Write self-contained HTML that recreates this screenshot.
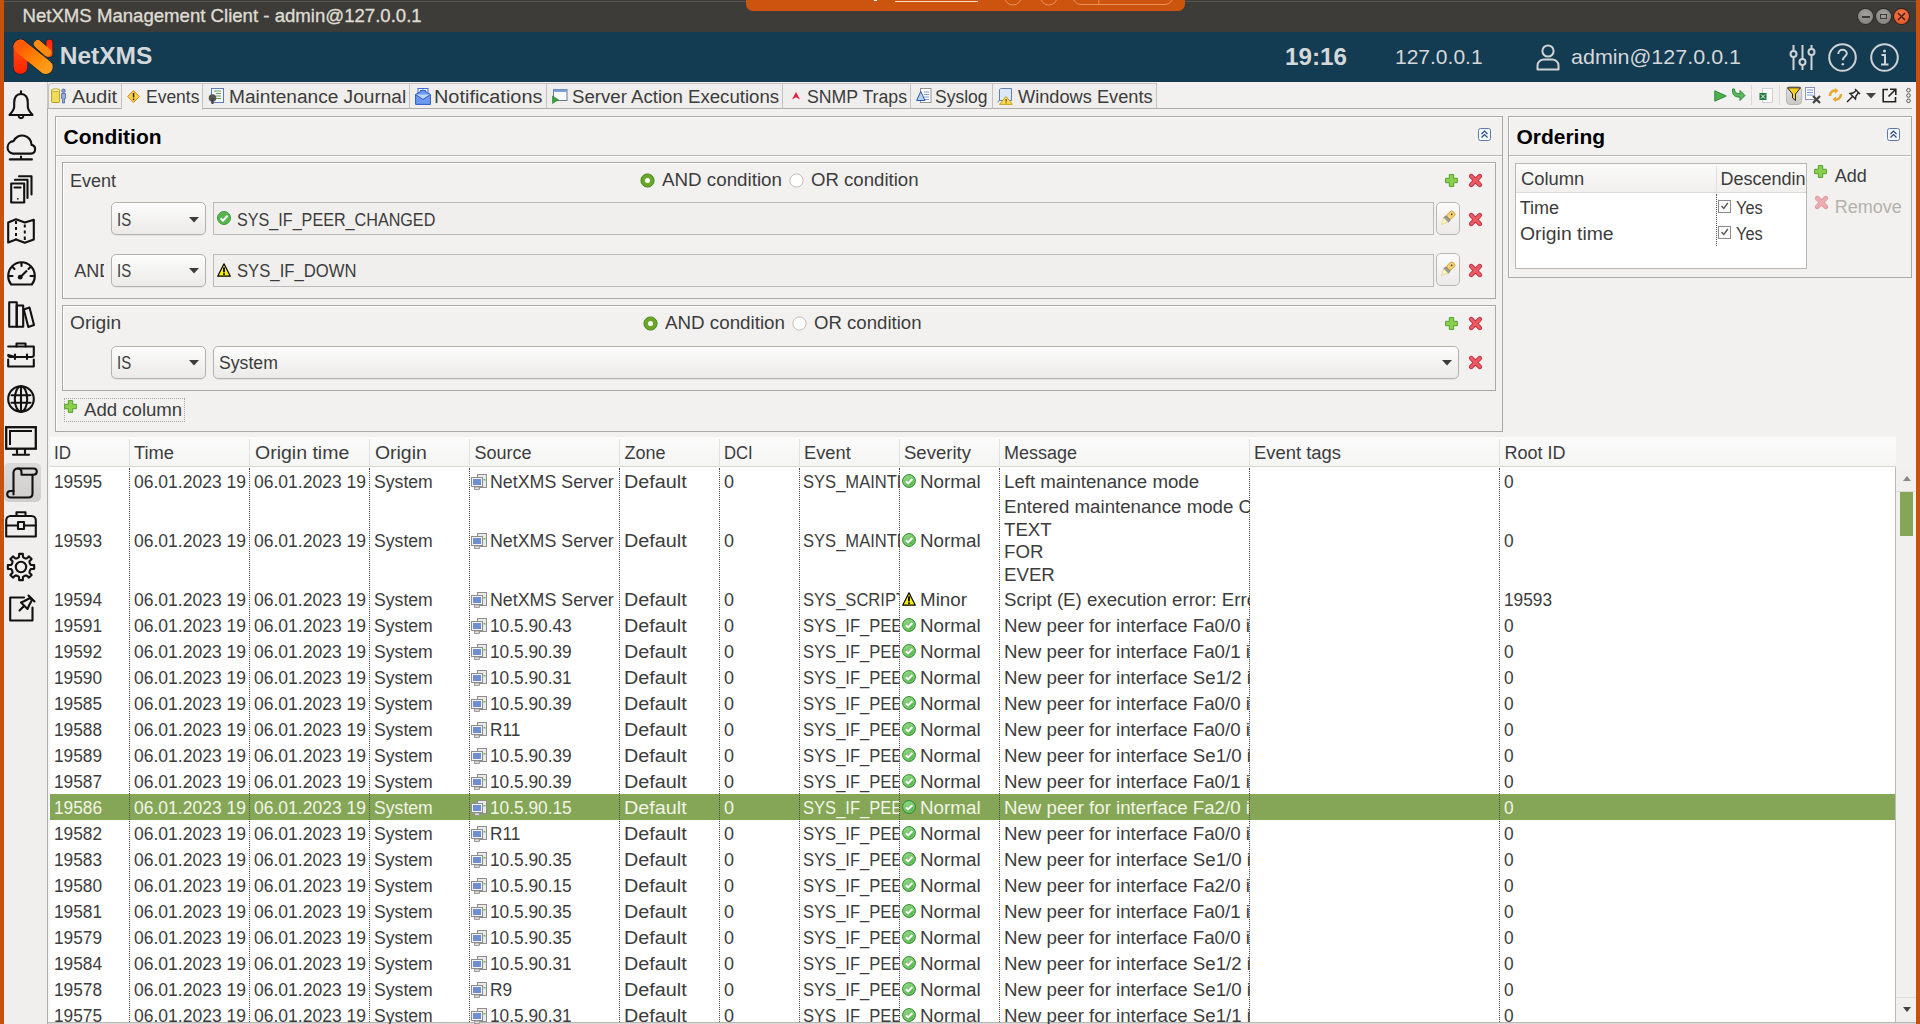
<!DOCTYPE html>
<html><head><meta charset="utf-8"><style>
html,body{margin:0;padding:0;}
body{width:1920px;height:1024px;overflow:hidden;position:relative;background:#f2f1f0;font-family:"Liberation Sans",sans-serif;}
.t{position:absolute;white-space:pre;transform-origin:0 0;}
.b{position:absolute;box-sizing:border-box;}
svg.b{overflow:visible;}
</style></head><body>
<div class="b" style="left:0px;top:0px;width:1920px;height:32px;background:#3d3c38;"></div>
<div class="b" style="left:0px;top:1px;width:1920px;height:1px;background:#57564f;"></div>
<div class="t" style="left:22.50px;top:7.25px;font-size:18.60px;line-height:18.60px;color:#dfdbd2;-webkit-text-stroke:0.35px #dfdbd2;">NetXMS Management Client - admin@127.0.0.1</div>
<div class="b" style="left:745.5px;top:-8px;width:439px;height:19.3px;background:#cd540f;border-radius:7px;"></div>
<div class="b" style="left:895px;top:0.5px;width:83px;height:1.2px;background:#fbe0c8;"></div>
<div class="b" style="left:874px;top:0px;width:3px;height:1px;background:#fff;"></div>
<svg class="b" style="left:1000px;top:-8px;" width="180" height="14" viewBox="0 0 180 14"><g fill="none" stroke="#f0a070" stroke-width="0.8"><circle cx="13" cy="4.5" r="8.5"/><circle cx="48.8" cy="4.5" r="8.5"/><rect x="73" y="-6" width="100" height="18.5" rx="8"/><path d="M98.8 0V12.5"/></g></svg>
<div class="b" style="left:1857.7px;top:8.55px;width:15.4px;height:15.4px;border-radius:50%;background:radial-gradient(circle at 50% 35%,#a4a3a0,#7b7a76);box-shadow:0 0 0 1px #2e2d2a;"></div>
<div class="b" style="left:1875.6px;top:8.55px;width:15.4px;height:15.4px;border-radius:50%;background:radial-gradient(circle at 50% 35%,#a4a3a0,#7b7a76);box-shadow:0 0 0 1px #2e2d2a;"></div>
<div class="b" style="left:1893.8px;top:8.55px;width:15.4px;height:15.4px;border-radius:50%;background:radial-gradient(circle at 50% 35%,#f4784a,#e0501f);box-shadow:0 0 0 1px #3a1d10;"></div>
<div class="b" style="left:1861.5px;top:16px;width:8px;height:1.6px;background:#3a3936;"></div>
<div class="b" style="left:1879.5px;top:13.5px;width:7.5px;height:5.5px;border:1.3px solid #3a3936;box-sizing:border-box;"></div>
<svg class="b" style="left:1897px;top:12px;" width="9" height="9" viewBox="0 0 9 9"><path d="M1 1L8 8M8 1L1 8" stroke="#4a1c0c" stroke-width="1.5"/></svg>
<div class="b" style="left:0px;top:0px;width:4px;height:1024px;background:#c9510f;"></div>
<div class="b" style="left:1916px;top:0px;width:4px;height:1024px;background:#c9510f;"></div>
<div class="b" style="left:4px;top:32px;width:1912px;height:50px;background:#133b52;"></div>
<div class="t" style="left:59.70px;top:44.01px;font-size:24.50px;line-height:24.50px;color:#d5d8da;font-weight:bold;">NetXMS</div>
<div class="t" style="left:1285.00px;top:44.68px;font-size:24.00px;line-height:24.00px;color:#d5d8da;font-weight:bold;transform:scaleX(1.0102);">19:16</div>
<div class="t" style="left:1395.00px;top:46.47px;font-size:21.00px;line-height:21.00px;color:#d5d8da;">127.0.0.1</div>
<div class="t" style="left:1571.00px;top:46.12px;font-size:21.00px;line-height:21.00px;color:#d5d8da;transform:scaleX(1.0236);">admin@127.0.0.1</div>
<div class="b" style="left:4px;top:82px;width:43px;height:942px;background:#f0efee;"></div>
<div class="b" style="left:47px;top:82px;width:1px;height:942px;background:#c8c6c2;"></div>
<div class="b" style="left:48px;top:82px;width:1868px;height:942px;background:#f2f1f0;"></div>
<div class="b" style="left:48px;top:108px;width:1864px;height:1px;background:#aeaca8;"></div>
<div class="b" style="left:47.5px;top:83px;width:74.5px;height:26px;background:#efeeec;border-right:1px solid #c4c2be;border-left:1px solid #c4c2be;border-top-left-radius:4px;border-top:1px solid #c4c2be;border-bottom:1px solid #aeaca8;"></div>
<div class="t" style="left:72.00px;top:87.66px;font-size:18.00px;line-height:18.00px;color:#3c3c3c;transform:scaleX(1.0969);">Audit</div>
<div class="b" style="left:122px;top:83px;width:81px;height:27px;background:#f2f1f0;border-right:1px solid #c4c2be;border-top:1px solid #c4c2be;"></div>
<div class="t" style="left:146.00px;top:87.66px;font-size:18.00px;line-height:18.00px;color:#3c3c3c;transform:scaleX(0.9704);">Events</div>
<div class="b" style="left:203px;top:83px;width:206.5px;height:26px;background:#efeeec;border-right:1px solid #c4c2be;border-top:1px solid #c4c2be;border-bottom:1px solid #aeaca8;"></div>
<div class="t" style="left:228.50px;top:87.66px;font-size:18.00px;line-height:18.00px;color:#3c3c3c;transform:scaleX(1.0605);">Maintenance Journal</div>
<div class="b" style="left:409.5px;top:83px;width:137.0px;height:26px;background:#efeeec;border-right:1px solid #c4c2be;border-top:1px solid #c4c2be;border-bottom:1px solid #aeaca8;"></div>
<div class="t" style="left:434.40px;top:87.66px;font-size:18.00px;line-height:18.00px;color:#3c3c3c;transform:scaleX(1.1057);">Notifications</div>
<div class="b" style="left:546.5px;top:83px;width:236.0px;height:26px;background:#efeeec;border-right:1px solid #c4c2be;border-top:1px solid #c4c2be;border-bottom:1px solid #aeaca8;"></div>
<div class="t" style="left:571.50px;top:87.66px;font-size:18.00px;line-height:18.00px;color:#3c3c3c;transform:scaleX(1.0350);">Server Action Executions</div>
<div class="b" style="left:782.5px;top:83px;width:128.0px;height:26px;background:#efeeec;border-right:1px solid #c4c2be;border-top:1px solid #c4c2be;border-bottom:1px solid #aeaca8;"></div>
<div class="t" style="left:807.20px;top:87.66px;font-size:18.00px;line-height:18.00px;color:#3c3c3c;transform:scaleX(0.9833);">SNMP Traps</div>
<div class="b" style="left:910.5px;top:83px;width:82.0px;height:26px;background:#efeeec;border-right:1px solid #c4c2be;border-top:1px solid #c4c2be;border-bottom:1px solid #aeaca8;"></div>
<div class="t" style="left:935.30px;top:87.66px;font-size:18.00px;line-height:18.00px;color:#3c3c3c;transform:scaleX(0.9718);">Syslog</div>
<div class="b" style="left:992.5px;top:83px;width:164.0px;height:26px;background:#efeeec;border-right:1px solid #c4c2be;border-top:1px solid #c4c2be;border-bottom:1px solid #aeaca8;"></div>
<div class="t" style="left:1017.80px;top:87.66px;font-size:18.00px;line-height:18.00px;color:#3c3c3c;transform:scaleX(1.0117);">Windows Events</div>
<div class="b" style="left:47px;top:108px;width:1px;height:916px;background:#aeaca8;"></div>
<div class="b" style="left:55px;top:116px;width:1448px;height:316px;border:1px solid #aaa8a4;box-shadow:inset 1px 1px 0 #ffffff;background:#f2f1f0;"></div>
<div class="b" style="left:56px;top:155px;width:1446px;height:1px;background:#b9b7b3;"></div>
<div class="b" style="left:56px;top:156px;width:1446px;height:1px;background:#ffffff;"></div>
<div class="t" style="left:63.60px;top:126.02px;font-size:21.00px;line-height:21.00px;color:#000000;font-weight:bold;">Condition</div>
<div class="b" style="left:62px;top:162px;width:1434px;height:137px;border:1px solid #aaa8a4;box-shadow:inset 1px 1px 0 #ffffff;background:#f2f1f0;"></div>
<div class="t" style="left:69.90px;top:171.66px;font-size:18.00px;line-height:18.00px;color:#3c3c3c;">Event</div>
<div class="t" style="left:74.20px;top:262.06px;font-size:18.00px;line-height:18.00px;color:#3c3c3c;width:29.5px;overflow:hidden;">AND</div>
<div class="b" style="left:62px;top:305px;width:1434px;height:86px;border:1px solid #aaa8a4;box-shadow:inset 1px 1px 0 #ffffff;background:#f2f1f0;"></div>
<div class="t" style="left:69.80px;top:314.36px;font-size:18.00px;line-height:18.00px;color:#3c3c3c;transform:scaleX(1.0664);">Origin</div>
<div class="b" style="left:110.5px;top:202px;width:95px;height:33px;border:1px solid #b3b1ad;border-radius:5px;background:linear-gradient(#fdfdfd,#ebeae8);box-shadow:0 1px 0 rgba(0,0,0,0.05);"></div>
<div class="t" style="left:116.70px;top:210.56px;font-size:18.00px;line-height:18.00px;color:#3c3c3c;transform:scaleX(0.8291);">IS</div>
<svg class="b" style="left:188.5px;top:216.5px;" width="10" height="6" viewBox="0 0 10 6"><path d="M0 0H10L5 5.5Z" fill="#3c3c3c"/></svg>
<div class="b" style="left:110.5px;top:253.5px;width:95px;height:33px;border:1px solid #b3b1ad;border-radius:5px;background:linear-gradient(#fdfdfd,#ebeae8);box-shadow:0 1px 0 rgba(0,0,0,0.05);"></div>
<div class="t" style="left:116.70px;top:262.06px;font-size:18.00px;line-height:18.00px;color:#3c3c3c;transform:scaleX(0.8291);">IS</div>
<svg class="b" style="left:188.5px;top:268.0px;" width="10" height="6" viewBox="0 0 10 6"><path d="M0 0H10L5 5.5Z" fill="#3c3c3c"/></svg>
<div class="b" style="left:110.5px;top:345.7px;width:95px;height:33px;border:1px solid #b3b1ad;border-radius:5px;background:linear-gradient(#fdfdfd,#ebeae8);box-shadow:0 1px 0 rgba(0,0,0,0.05);"></div>
<div class="t" style="left:116.70px;top:354.26px;font-size:18.00px;line-height:18.00px;color:#3c3c3c;transform:scaleX(0.8291);">IS</div>
<svg class="b" style="left:188.5px;top:360.2px;" width="10" height="6" viewBox="0 0 10 6"><path d="M0 0H10L5 5.5Z" fill="#3c3c3c"/></svg>
<div class="b" style="left:213.4px;top:345.7px;width:1246px;height:33px;border:1px solid #b3b1ad;border-radius:5px;background:linear-gradient(#fdfdfd,#ebeae8);box-shadow:0 1px 0 rgba(0,0,0,0.05);"></div>
<div class="t" style="left:219.20px;top:354.26px;font-size:18.00px;line-height:18.00px;color:#3c3c3c;transform:scaleX(0.9815);">System</div>
<svg class="b" style="left:1442.4px;top:360.2px;" width="10" height="6" viewBox="0 0 10 6"><path d="M0 0H10L5 5.5Z" fill="#3c3c3c"/></svg>
<div class="b" style="left:212.5px;top:201.7px;width:1221px;height:33.5px;border:1px solid #bdbbb7;background:#f0efee;"></div>
<div class="b" style="left:212.5px;top:253.5px;width:1221px;height:33.5px;border:1px solid #bdbbb7;background:#f0efee;"></div>
<div class="t" style="left:236.70px;top:210.56px;font-size:18.00px;line-height:18.00px;color:#3c3c3c;transform:scaleX(0.8970);">SYS_IF_PEER_CHANGED</div>
<div class="t" style="left:236.70px;top:262.06px;font-size:18.00px;line-height:18.00px;color:#3c3c3c;transform:scaleX(0.9262);">SYS_IF_DOWN</div>
<div class="b" style="left:1436.4px;top:202px;width:23.3px;height:32.5px;border:1px solid #b9b7b3;border-radius:5px;background:linear-gradient(#fbfbfa,#eceae8);"></div>
<div class="b" style="left:1436.4px;top:253.4px;width:23.3px;height:32.5px;border:1px solid #b9b7b3;border-radius:5px;background:linear-gradient(#fbfbfa,#eceae8);"></div>
<div class="b" style="left:63.5px;top:398.4px;width:121.5px;height:23.2px;border:1px dotted #a8a6a2;"></div>
<div class="t" style="left:84.40px;top:401.46px;font-size:18.00px;line-height:18.00px;color:#3c3c3c;transform:scaleX(1.0332);">Add column</div>
<div class="t" style="left:661.70px;top:171.46px;font-size:18.00px;line-height:18.00px;color:#3c3c3c;transform:scaleX(1.0430);">AND condition</div>
<div class="t" style="left:810.80px;top:171.46px;font-size:18.00px;line-height:18.00px;color:#3c3c3c;transform:scaleX(1.0332);">OR condition</div>
<div class="t" style="left:664.70px;top:314.46px;font-size:18.00px;line-height:18.00px;color:#3c3c3c;transform:scaleX(1.0430);">AND condition</div>
<div class="t" style="left:813.80px;top:314.46px;font-size:18.00px;line-height:18.00px;color:#3c3c3c;transform:scaleX(1.0332);">OR condition</div>
<div class="b" style="left:1508px;top:116px;width:404px;height:162px;border:1px solid #aaa8a4;box-shadow:inset 1px 1px 0 #ffffff;background:#f2f1f0;"></div>
<div class="b" style="left:1509px;top:155px;width:402px;height:1px;background:#b9b7b3;"></div>
<div class="b" style="left:1509px;top:156px;width:402px;height:1px;background:#ffffff;"></div>
<div class="t" style="left:1516.40px;top:126.12px;font-size:21.00px;line-height:21.00px;color:#000000;font-weight:bold;">Ordering</div>
<div class="b" style="left:1515.3px;top:162.5px;width:291.5px;height:106px;border:1px solid #b9b7b3;background:#ffffff;"></div>
<div class="b" style="left:1516.3px;top:163.5px;width:289.5px;height:29.5px;background:linear-gradient(#fafaf9,#f1f0ef);border-bottom:1px solid #dcdad7;"></div>
<div class="b" style="left:1715.5px;top:166px;width:1px;height:26px;background:#e2e0dd;"></div>
<div class="t" style="left:1520.50px;top:169.76px;font-size:18.00px;line-height:18.00px;color:#3c3c3c;transform:scaleX(1.0206);">Column</div>
<div class="b" style="left:1716px;top:163px;width:90px;height:30px;overflow:hidden;"><div class="t" style="left:4.5px;top:6.76px;font-size:18px;line-height:18px;color:#3c3c3c;">Descending</div></div>
<div class="b" style="left:1715.5px;top:194px;width:1px;height:52px;border-left:1px dotted #555;"></div>
<div class="t" style="left:1519.70px;top:198.66px;font-size:18.00px;line-height:18.00px;color:#3c3c3c;">Time</div>
<div class="t" style="left:1519.70px;top:224.96px;font-size:18.00px;line-height:18.00px;color:#3c3c3c;transform:scaleX(1.0757);">Origin time</div>
<div class="t" style="left:1735.80px;top:198.66px;font-size:18.00px;line-height:18.00px;color:#3c3c3c;transform:scaleX(0.9092);">Yes</div>
<div class="t" style="left:1735.80px;top:224.96px;font-size:18.00px;line-height:18.00px;color:#3c3c3c;transform:scaleX(0.9092);">Yes</div>
<div class="b" style="left:1718px;top:200px;width:12.8px;height:12.8px;border:1px solid #8e8c88;background:#fafafa;"></div>
<svg class="b" style="left:1720px;top:202px;" width="9" height="8" viewBox="0 0 9 8"><path d="M1.5 4L3.8 6.5L7.8 1" stroke="#555" stroke-width="1.3" fill="none"/></svg>
<div class="b" style="left:1718px;top:226.3px;width:12.8px;height:12.8px;border:1px solid #8e8c88;background:#fafafa;"></div>
<svg class="b" style="left:1720px;top:228.3px;" width="9" height="8" viewBox="0 0 9 8"><path d="M1.5 4L3.8 6.5L7.8 1" stroke="#555" stroke-width="1.3" fill="none"/></svg>
<div class="t" style="left:1834.70px;top:166.56px;font-size:18.00px;line-height:18.00px;color:#3c3c3c;">Add</div>
<div class="t" style="left:1834.70px;top:197.56px;font-size:18.00px;line-height:18.00px;color:#b3b1ad;">Remove</div>
<div class="b" style="left:49.5px;top:436.5px;width:1846px;height:30.5px;background:linear-gradient(#fbfbfb,#f5f5f4);border-bottom:1px solid #d9d7d4;"></div>
<div class="t" style="left:54.40px;top:443.51px;font-size:18.00px;line-height:18.00px;color:#3c3c3c;transform:scaleX(0.9444);">ID</div>
<div class="b" style="left:129px;top:439px;width:1px;height:27px;background:#e4e2df;"></div>
<div class="t" style="left:134.40px;top:443.51px;font-size:18.00px;line-height:18.00px;color:#3c3c3c;transform:scaleX(1.0170);">Time</div>
<div class="b" style="left:249px;top:439px;width:1px;height:27px;background:#e4e2df;"></div>
<div class="t" style="left:254.50px;top:443.51px;font-size:18.00px;line-height:18.00px;color:#3c3c3c;transform:scaleX(1.0831);">Origin time</div>
<div class="b" style="left:369px;top:439px;width:1px;height:27px;background:#e4e2df;"></div>
<div class="t" style="left:374.50px;top:443.51px;font-size:18.00px;line-height:18.00px;color:#3c3c3c;transform:scaleX(1.0779);">Origin</div>
<div class="b" style="left:469px;top:439px;width:1px;height:27px;background:#e4e2df;"></div>
<div class="t" style="left:474.50px;top:443.51px;font-size:18.00px;line-height:18.00px;color:#3c3c3c;">Source</div>
<div class="b" style="left:619px;top:439px;width:1px;height:27px;background:#e4e2df;"></div>
<div class="t" style="left:624.50px;top:443.51px;font-size:18.00px;line-height:18.00px;color:#3c3c3c;">Zone</div>
<div class="b" style="left:719px;top:439px;width:1px;height:27px;background:#e4e2df;"></div>
<div class="t" style="left:723.80px;top:443.51px;font-size:18.00px;line-height:18.00px;color:#3c3c3c;transform:scaleX(0.9226);">DCI</div>
<div class="b" style="left:799px;top:439px;width:1px;height:27px;background:#e4e2df;"></div>
<div class="t" style="left:804.00px;top:443.51px;font-size:18.00px;line-height:18.00px;color:#3c3c3c;transform:scaleX(1.0146);">Event</div>
<div class="b" style="left:899px;top:439px;width:1px;height:27px;background:#e4e2df;"></div>
<div class="t" style="left:903.70px;top:443.51px;font-size:18.00px;line-height:18.00px;color:#3c3c3c;transform:scaleX(1.0305);">Severity</div>
<div class="b" style="left:999px;top:439px;width:1px;height:27px;background:#e4e2df;"></div>
<div class="t" style="left:1004.00px;top:443.51px;font-size:18.00px;line-height:18.00px;color:#3c3c3c;">Message</div>
<div class="b" style="left:1249px;top:439px;width:1px;height:27px;background:#e4e2df;"></div>
<div class="t" style="left:1253.80px;top:443.51px;font-size:18.00px;line-height:18.00px;color:#3c3c3c;transform:scaleX(1.0230);">Event tags</div>
<div class="b" style="left:1499px;top:439px;width:1px;height:27px;background:#e4e2df;"></div>
<div class="t" style="left:1504.50px;top:443.51px;font-size:18.00px;line-height:18.00px;color:#3c3c3c;">Root ID</div>
<div class="b" style="left:48px;top:467px;width:2px;height:555px;background:#f6f6f5;"></div>
<div class="b" style="left:50px;top:467px;width:1846px;height:555px;background:#ffffff;"></div>
<div class="b" style="left:1895px;top:467px;width:1px;height:555px;background:#bdbbb7;"></div>
<div class="b" style="left:1896px;top:467px;width:20px;height:557px;background:#f1f0ef;"></div>
<div class="b" style="left:1896px;top:491px;width:20px;height:1px;background:#dedcd9;"></div>
<div class="b" style="left:1896px;top:997px;width:20px;height:1px;background:#dedcd9;"></div>
<svg class="b" style="left:1902.5px;top:476px;" width="8" height="5" viewBox="0 0 8 5"><path d="M0 5H8L4 0Z" fill="#888"/></svg>
<svg class="b" style="left:1903px;top:1007px;" width="8" height="5" viewBox="0 0 8 5"><path d="M0 0H8L4 5Z" fill="#444"/></svg>
<div class="b" style="left:1900px;top:491.7px;width:13px;height:44px;background:#85a657;"></div>
<div class="b" style="left:48px;top:1022px;width:1868px;height:1px;background:#b9b7b3;"></div>
<div class="b" style="left:48px;top:1023px;width:1868px;height:1px;background:#dcdad7;"></div>
<div class="b" style="left:48.0px;top:468.0px;width:81.5px;height:26.0px;overflow:hidden;"><div class="t" style="left:6.4px;top:5.26px;font-size:18px;line-height:18px;color:#3c3c3c;transform:scaleX(0.960);">19595</div></div>
<div class="b" style="left:129.5px;top:468.0px;width:120.0px;height:26.0px;overflow:hidden;"><div class="t" style="left:4.5px;top:5.26px;font-size:18px;line-height:18px;color:#3c3c3c;transform:scaleX(0.973);">06.01.2023 19</div></div>
<div class="b" style="left:249.5px;top:468.0px;width:120.0px;height:26.0px;overflow:hidden;"><div class="t" style="left:4.5px;top:5.26px;font-size:18px;line-height:18px;color:#3c3c3c;transform:scaleX(0.973);">06.01.2023 19</div></div>
<div class="b" style="left:369.5px;top:468.0px;width:100.0px;height:26.0px;overflow:hidden;"><div class="t" style="left:4.0px;top:5.26px;font-size:18px;line-height:18px;color:#3c3c3c;transform:scaleX(0.979);">System</div></div>
<div class="b" style="left:469.5px;top:468.0px;width:150.0px;height:26.0px;overflow:hidden;"><div class="t" style="left:20.5px;top:5.26px;font-size:18px;line-height:18px;color:#3c3c3c;transform:scaleX(0.990);">NetXMS Server</div></div>
<svg class="b" style="left:471.0px;top:473.5px" width="16" height="16" viewBox="0 0 16 16"><rect x="6.5" y="0.5" width="9" height="13" fill="#e9e9e9" stroke="#8d8d8d"/><rect x="0.5" y="3.5" width="11" height="9" fill="#f3f3f3" stroke="#8d8d8d"/><rect x="2" y="5" width="8" height="6" fill="#6f8fd0"/><rect x="12.5" y="5" width="2" height="1.5" fill="#6cb85a"/><rect x="3.5" y="13" width="5" height="2.5" fill="#dcdcdc" stroke="#8d8d8d" stroke-width="0.8"/></svg>
<div class="b" style="left:619.5px;top:468.0px;width:100.0px;height:26.0px;overflow:hidden;"><div class="t" style="left:4.5px;top:5.26px;font-size:18px;line-height:18px;color:#3c3c3c;transform:scaleX(1.099);">Default</div></div>
<div class="b" style="left:719.5px;top:468.0px;width:80.0px;height:26.0px;overflow:hidden;"><div class="t" style="left:4.5px;top:5.26px;font-size:18px;line-height:18px;color:#3c3c3c;">0</div></div>
<div class="b" style="left:799.5px;top:468.0px;width:100.0px;height:26.0px;overflow:hidden;"><div class="t" style="left:3.6px;top:5.26px;font-size:18px;line-height:18px;color:#3c3c3c;transform:scaleX(0.920);">SYS_MAINTENANCE</div></div>
<div class="b" style="left:899.5px;top:468.0px;width:100.0px;height:26.0px;overflow:hidden;"><div class="t" style="left:20.4px;top:5.26px;font-size:18px;line-height:18px;color:#3c3c3c;transform:scaleX(1.044);">Normal</div></div>
<svg class="b" style="left:902.0px;top:474.0px" width="14" height="14" viewBox="0 0 14 14"><defs><radialGradient id="cg468" cx="0.4" cy="0.3" r="0.8"><stop offset="0" stop-color="#8ad47e"/><stop offset="1" stop-color="#3ea836"/></radialGradient></defs><circle cx="7" cy="7" r="6.4" fill="url(#cg468)" stroke="#2f8a2a" stroke-width="1"/><circle cx="7" cy="7" r="5.2" fill="none" stroke="#b8e8b0" stroke-width="0.7" opacity="0.7"/><path d="M3.8 7.2L6.1 9.4L10.4 5" stroke="#fff" stroke-width="2" fill="none"/></svg>
<div class="b" style="left:999.5px;top:468.0px;width:250.0px;height:26.0px;overflow:hidden;"><div class="t" style="left:4.0px;top:5.26px;font-size:18px;line-height:18px;color:#3c3c3c;transform:scaleX(1.037);">Left maintenance mode</div></div>
<div class="b" style="left:1249.5px;top:468.0px;width:250.0px;height:26.0px;overflow:hidden;"><div class="t" style="left:4.5px;top:5.26px;font-size:18px;line-height:18px;color:#3c3c3c;"></div></div>
<div class="b" style="left:1499.5px;top:468.0px;width:396.0px;height:26.0px;overflow:hidden;"><div class="t" style="left:4.5px;top:5.26px;font-size:18px;line-height:18px;color:#3c3c3c;transform:scaleX(0.960);">0</div></div>
<div class="b" style="left:48.0px;top:494.0px;width:81.5px;height:92.0px;overflow:hidden;"><div class="t" style="left:6.4px;top:38.26px;font-size:18px;line-height:18px;color:#3c3c3c;transform:scaleX(0.960);">19593</div></div>
<div class="b" style="left:129.5px;top:494.0px;width:120.0px;height:92.0px;overflow:hidden;"><div class="t" style="left:4.5px;top:38.26px;font-size:18px;line-height:18px;color:#3c3c3c;transform:scaleX(0.973);">06.01.2023 19</div></div>
<div class="b" style="left:249.5px;top:494.0px;width:120.0px;height:92.0px;overflow:hidden;"><div class="t" style="left:4.5px;top:38.26px;font-size:18px;line-height:18px;color:#3c3c3c;transform:scaleX(0.973);">06.01.2023 19</div></div>
<div class="b" style="left:369.5px;top:494.0px;width:100.0px;height:92.0px;overflow:hidden;"><div class="t" style="left:4.0px;top:38.26px;font-size:18px;line-height:18px;color:#3c3c3c;transform:scaleX(0.979);">System</div></div>
<div class="b" style="left:469.5px;top:494.0px;width:150.0px;height:92.0px;overflow:hidden;"><div class="t" style="left:20.5px;top:38.26px;font-size:18px;line-height:18px;color:#3c3c3c;transform:scaleX(0.990);">NetXMS Server</div></div>
<svg class="b" style="left:471.0px;top:532.5px" width="16" height="16" viewBox="0 0 16 16"><rect x="6.5" y="0.5" width="9" height="13" fill="#e9e9e9" stroke="#8d8d8d"/><rect x="0.5" y="3.5" width="11" height="9" fill="#f3f3f3" stroke="#8d8d8d"/><rect x="2" y="5" width="8" height="6" fill="#6f8fd0"/><rect x="12.5" y="5" width="2" height="1.5" fill="#6cb85a"/><rect x="3.5" y="13" width="5" height="2.5" fill="#dcdcdc" stroke="#8d8d8d" stroke-width="0.8"/></svg>
<div class="b" style="left:619.5px;top:494.0px;width:100.0px;height:92.0px;overflow:hidden;"><div class="t" style="left:4.5px;top:38.26px;font-size:18px;line-height:18px;color:#3c3c3c;transform:scaleX(1.099);">Default</div></div>
<div class="b" style="left:719.5px;top:494.0px;width:80.0px;height:92.0px;overflow:hidden;"><div class="t" style="left:4.5px;top:38.26px;font-size:18px;line-height:18px;color:#3c3c3c;">0</div></div>
<div class="b" style="left:799.5px;top:494.0px;width:100.0px;height:92.0px;overflow:hidden;"><div class="t" style="left:3.6px;top:38.26px;font-size:18px;line-height:18px;color:#3c3c3c;transform:scaleX(0.920);">SYS_MAINTENANCE</div></div>
<div class="b" style="left:899.5px;top:494.0px;width:100.0px;height:92.0px;overflow:hidden;"><div class="t" style="left:20.4px;top:38.26px;font-size:18px;line-height:18px;color:#3c3c3c;transform:scaleX(1.044);">Normal</div></div>
<svg class="b" style="left:902.0px;top:533.0px" width="14" height="14" viewBox="0 0 14 14"><defs><radialGradient id="cg494" cx="0.4" cy="0.3" r="0.8"><stop offset="0" stop-color="#8ad47e"/><stop offset="1" stop-color="#3ea836"/></radialGradient></defs><circle cx="7" cy="7" r="6.4" fill="url(#cg494)" stroke="#2f8a2a" stroke-width="1"/><circle cx="7" cy="7" r="5.2" fill="none" stroke="#b8e8b0" stroke-width="0.7" opacity="0.7"/><path d="M3.8 7.2L6.1 9.4L10.4 5" stroke="#fff" stroke-width="2" fill="none"/></svg>
<div class="b" style="left:999.5px;top:495.5px;width:250.0px;height:22.5px;overflow:hidden;"><div class="t" style="left:4.0px;top:2.76px;font-size:18px;line-height:18px;color:#3c3c3c;transform:scaleX(1.037);">Entered maintenance mode C</div></div>
<div class="b" style="left:999.5px;top:518.0px;width:250.0px;height:22.5px;overflow:hidden;"><div class="t" style="left:4.0px;top:2.76px;font-size:18px;line-height:18px;color:#3c3c3c;transform:scaleX(1.037);">TEXT</div></div>
<div class="b" style="left:999.5px;top:540.5px;width:250.0px;height:22.5px;overflow:hidden;"><div class="t" style="left:4.0px;top:2.76px;font-size:18px;line-height:18px;color:#3c3c3c;transform:scaleX(1.037);">FOR</div></div>
<div class="b" style="left:999.5px;top:563.0px;width:250.0px;height:22.5px;overflow:hidden;"><div class="t" style="left:4.0px;top:2.76px;font-size:18px;line-height:18px;color:#3c3c3c;transform:scaleX(1.037);">EVER</div></div>
<div class="b" style="left:1249.5px;top:494.0px;width:250.0px;height:92.0px;overflow:hidden;"><div class="t" style="left:4.5px;top:38.26px;font-size:18px;line-height:18px;color:#3c3c3c;"></div></div>
<div class="b" style="left:1499.5px;top:494.0px;width:396.0px;height:92.0px;overflow:hidden;"><div class="t" style="left:4.5px;top:38.26px;font-size:18px;line-height:18px;color:#3c3c3c;transform:scaleX(0.960);">0</div></div>
<div class="b" style="left:48.0px;top:586.0px;width:81.5px;height:26.0px;overflow:hidden;"><div class="t" style="left:6.4px;top:5.26px;font-size:18px;line-height:18px;color:#3c3c3c;transform:scaleX(0.960);">19594</div></div>
<div class="b" style="left:129.5px;top:586.0px;width:120.0px;height:26.0px;overflow:hidden;"><div class="t" style="left:4.5px;top:5.26px;font-size:18px;line-height:18px;color:#3c3c3c;transform:scaleX(0.973);">06.01.2023 19</div></div>
<div class="b" style="left:249.5px;top:586.0px;width:120.0px;height:26.0px;overflow:hidden;"><div class="t" style="left:4.5px;top:5.26px;font-size:18px;line-height:18px;color:#3c3c3c;transform:scaleX(0.973);">06.01.2023 19</div></div>
<div class="b" style="left:369.5px;top:586.0px;width:100.0px;height:26.0px;overflow:hidden;"><div class="t" style="left:4.0px;top:5.26px;font-size:18px;line-height:18px;color:#3c3c3c;transform:scaleX(0.979);">System</div></div>
<div class="b" style="left:469.5px;top:586.0px;width:150.0px;height:26.0px;overflow:hidden;"><div class="t" style="left:20.5px;top:5.26px;font-size:18px;line-height:18px;color:#3c3c3c;transform:scaleX(0.990);">NetXMS Server</div></div>
<svg class="b" style="left:471.0px;top:591.5px" width="16" height="16" viewBox="0 0 16 16"><rect x="6.5" y="0.5" width="9" height="13" fill="#e9e9e9" stroke="#8d8d8d"/><rect x="0.5" y="3.5" width="11" height="9" fill="#f3f3f3" stroke="#8d8d8d"/><rect x="2" y="5" width="8" height="6" fill="#6f8fd0"/><rect x="12.5" y="5" width="2" height="1.5" fill="#6cb85a"/><rect x="3.5" y="13" width="5" height="2.5" fill="#dcdcdc" stroke="#8d8d8d" stroke-width="0.8"/></svg>
<div class="b" style="left:619.5px;top:586.0px;width:100.0px;height:26.0px;overflow:hidden;"><div class="t" style="left:4.5px;top:5.26px;font-size:18px;line-height:18px;color:#3c3c3c;transform:scaleX(1.099);">Default</div></div>
<div class="b" style="left:719.5px;top:586.0px;width:80.0px;height:26.0px;overflow:hidden;"><div class="t" style="left:4.5px;top:5.26px;font-size:18px;line-height:18px;color:#3c3c3c;">0</div></div>
<div class="b" style="left:799.5px;top:586.0px;width:100.0px;height:26.0px;overflow:hidden;"><div class="t" style="left:3.6px;top:5.26px;font-size:18px;line-height:18px;color:#3c3c3c;transform:scaleX(0.920);">SYS_SCRIPT_ERROR</div></div>
<div class="b" style="left:899.5px;top:586.0px;width:100.0px;height:26.0px;overflow:hidden;"><div class="t" style="left:20.4px;top:5.26px;font-size:18px;line-height:18px;color:#3c3c3c;transform:scaleX(1.044);">Minor</div></div>
<svg class="b" style="left:902.0px;top:592.0px" width="14" height="14" viewBox="0 0 14 14"><path d="M7 0.8L13.3 13.2H0.7Z" fill="#f4f000" stroke="#000" stroke-width="1.2" stroke-linejoin="round"/><rect x="6.1" y="4.4" width="1.8" height="5" fill="#000"/><rect x="6.1" y="10.3" width="1.8" height="1.8" fill="#000"/></svg>
<div class="b" style="left:999.5px;top:586.0px;width:250.0px;height:26.0px;overflow:hidden;"><div class="t" style="left:4.0px;top:5.26px;font-size:18px;line-height:18px;color:#3c3c3c;transform:scaleX(1.037);">Script (E) execution error: Error</div></div>
<div class="b" style="left:1249.5px;top:586.0px;width:250.0px;height:26.0px;overflow:hidden;"><div class="t" style="left:4.5px;top:5.26px;font-size:18px;line-height:18px;color:#3c3c3c;"></div></div>
<div class="b" style="left:1499.5px;top:586.0px;width:396.0px;height:26.0px;overflow:hidden;"><div class="t" style="left:4.5px;top:5.26px;font-size:18px;line-height:18px;color:#3c3c3c;transform:scaleX(0.960);">19593</div></div>
<div class="b" style="left:48.0px;top:612.0px;width:81.5px;height:26.0px;overflow:hidden;"><div class="t" style="left:6.4px;top:5.26px;font-size:18px;line-height:18px;color:#3c3c3c;transform:scaleX(0.960);">19591</div></div>
<div class="b" style="left:129.5px;top:612.0px;width:120.0px;height:26.0px;overflow:hidden;"><div class="t" style="left:4.5px;top:5.26px;font-size:18px;line-height:18px;color:#3c3c3c;transform:scaleX(0.973);">06.01.2023 19</div></div>
<div class="b" style="left:249.5px;top:612.0px;width:120.0px;height:26.0px;overflow:hidden;"><div class="t" style="left:4.5px;top:5.26px;font-size:18px;line-height:18px;color:#3c3c3c;transform:scaleX(0.973);">06.01.2023 19</div></div>
<div class="b" style="left:369.5px;top:612.0px;width:100.0px;height:26.0px;overflow:hidden;"><div class="t" style="left:4.0px;top:5.26px;font-size:18px;line-height:18px;color:#3c3c3c;transform:scaleX(0.979);">System</div></div>
<div class="b" style="left:469.5px;top:612.0px;width:150.0px;height:26.0px;overflow:hidden;"><div class="t" style="left:20.5px;top:5.26px;font-size:18px;line-height:18px;color:#3c3c3c;transform:scaleX(0.960);">10.5.90.43</div></div>
<svg class="b" style="left:471.0px;top:617.5px" width="16" height="16" viewBox="0 0 16 16"><rect x="6.5" y="0.5" width="9" height="13" fill="#e9e9e9" stroke="#8d8d8d"/><rect x="0.5" y="3.5" width="11" height="9" fill="#f3f3f3" stroke="#8d8d8d"/><rect x="2" y="5" width="8" height="6" fill="#6f8fd0"/><rect x="12.5" y="5" width="2" height="1.5" fill="#6cb85a"/><rect x="3.5" y="13" width="5" height="2.5" fill="#dcdcdc" stroke="#8d8d8d" stroke-width="0.8"/></svg>
<div class="b" style="left:619.5px;top:612.0px;width:100.0px;height:26.0px;overflow:hidden;"><div class="t" style="left:4.5px;top:5.26px;font-size:18px;line-height:18px;color:#3c3c3c;transform:scaleX(1.099);">Default</div></div>
<div class="b" style="left:719.5px;top:612.0px;width:80.0px;height:26.0px;overflow:hidden;"><div class="t" style="left:4.5px;top:5.26px;font-size:18px;line-height:18px;color:#3c3c3c;">0</div></div>
<div class="b" style="left:799.5px;top:612.0px;width:100.0px;height:26.0px;overflow:hidden;"><div class="t" style="left:3.6px;top:5.26px;font-size:18px;line-height:18px;color:#3c3c3c;transform:scaleX(0.920);">SYS_IF_PEER_CHANGED</div></div>
<div class="b" style="left:899.5px;top:612.0px;width:100.0px;height:26.0px;overflow:hidden;"><div class="t" style="left:20.4px;top:5.26px;font-size:18px;line-height:18px;color:#3c3c3c;transform:scaleX(1.044);">Normal</div></div>
<svg class="b" style="left:902.0px;top:618.0px" width="14" height="14" viewBox="0 0 14 14"><defs><radialGradient id="cg612" cx="0.4" cy="0.3" r="0.8"><stop offset="0" stop-color="#8ad47e"/><stop offset="1" stop-color="#3ea836"/></radialGradient></defs><circle cx="7" cy="7" r="6.4" fill="url(#cg612)" stroke="#2f8a2a" stroke-width="1"/><circle cx="7" cy="7" r="5.2" fill="none" stroke="#b8e8b0" stroke-width="0.7" opacity="0.7"/><path d="M3.8 7.2L6.1 9.4L10.4 5" stroke="#fff" stroke-width="2" fill="none"/></svg>
<div class="b" style="left:999.5px;top:612.0px;width:250.0px;height:26.0px;overflow:hidden;"><div class="t" style="left:4.0px;top:5.26px;font-size:18px;line-height:18px;color:#3c3c3c;transform:scaleX(1.037);">New peer for interface Fa0/0 i</div></div>
<div class="b" style="left:1249.5px;top:612.0px;width:250.0px;height:26.0px;overflow:hidden;"><div class="t" style="left:4.5px;top:5.26px;font-size:18px;line-height:18px;color:#3c3c3c;"></div></div>
<div class="b" style="left:1499.5px;top:612.0px;width:396.0px;height:26.0px;overflow:hidden;"><div class="t" style="left:4.5px;top:5.26px;font-size:18px;line-height:18px;color:#3c3c3c;transform:scaleX(0.960);">0</div></div>
<div class="b" style="left:48.0px;top:638.0px;width:81.5px;height:26.0px;overflow:hidden;"><div class="t" style="left:6.4px;top:5.26px;font-size:18px;line-height:18px;color:#3c3c3c;transform:scaleX(0.960);">19592</div></div>
<div class="b" style="left:129.5px;top:638.0px;width:120.0px;height:26.0px;overflow:hidden;"><div class="t" style="left:4.5px;top:5.26px;font-size:18px;line-height:18px;color:#3c3c3c;transform:scaleX(0.973);">06.01.2023 19</div></div>
<div class="b" style="left:249.5px;top:638.0px;width:120.0px;height:26.0px;overflow:hidden;"><div class="t" style="left:4.5px;top:5.26px;font-size:18px;line-height:18px;color:#3c3c3c;transform:scaleX(0.973);">06.01.2023 19</div></div>
<div class="b" style="left:369.5px;top:638.0px;width:100.0px;height:26.0px;overflow:hidden;"><div class="t" style="left:4.0px;top:5.26px;font-size:18px;line-height:18px;color:#3c3c3c;transform:scaleX(0.979);">System</div></div>
<div class="b" style="left:469.5px;top:638.0px;width:150.0px;height:26.0px;overflow:hidden;"><div class="t" style="left:20.5px;top:5.26px;font-size:18px;line-height:18px;color:#3c3c3c;transform:scaleX(0.960);">10.5.90.39</div></div>
<svg class="b" style="left:471.0px;top:643.5px" width="16" height="16" viewBox="0 0 16 16"><rect x="6.5" y="0.5" width="9" height="13" fill="#e9e9e9" stroke="#8d8d8d"/><rect x="0.5" y="3.5" width="11" height="9" fill="#f3f3f3" stroke="#8d8d8d"/><rect x="2" y="5" width="8" height="6" fill="#6f8fd0"/><rect x="12.5" y="5" width="2" height="1.5" fill="#6cb85a"/><rect x="3.5" y="13" width="5" height="2.5" fill="#dcdcdc" stroke="#8d8d8d" stroke-width="0.8"/></svg>
<div class="b" style="left:619.5px;top:638.0px;width:100.0px;height:26.0px;overflow:hidden;"><div class="t" style="left:4.5px;top:5.26px;font-size:18px;line-height:18px;color:#3c3c3c;transform:scaleX(1.099);">Default</div></div>
<div class="b" style="left:719.5px;top:638.0px;width:80.0px;height:26.0px;overflow:hidden;"><div class="t" style="left:4.5px;top:5.26px;font-size:18px;line-height:18px;color:#3c3c3c;">0</div></div>
<div class="b" style="left:799.5px;top:638.0px;width:100.0px;height:26.0px;overflow:hidden;"><div class="t" style="left:3.6px;top:5.26px;font-size:18px;line-height:18px;color:#3c3c3c;transform:scaleX(0.920);">SYS_IF_PEER_CHANGED</div></div>
<div class="b" style="left:899.5px;top:638.0px;width:100.0px;height:26.0px;overflow:hidden;"><div class="t" style="left:20.4px;top:5.26px;font-size:18px;line-height:18px;color:#3c3c3c;transform:scaleX(1.044);">Normal</div></div>
<svg class="b" style="left:902.0px;top:644.0px" width="14" height="14" viewBox="0 0 14 14"><defs><radialGradient id="cg638" cx="0.4" cy="0.3" r="0.8"><stop offset="0" stop-color="#8ad47e"/><stop offset="1" stop-color="#3ea836"/></radialGradient></defs><circle cx="7" cy="7" r="6.4" fill="url(#cg638)" stroke="#2f8a2a" stroke-width="1"/><circle cx="7" cy="7" r="5.2" fill="none" stroke="#b8e8b0" stroke-width="0.7" opacity="0.7"/><path d="M3.8 7.2L6.1 9.4L10.4 5" stroke="#fff" stroke-width="2" fill="none"/></svg>
<div class="b" style="left:999.5px;top:638.0px;width:250.0px;height:26.0px;overflow:hidden;"><div class="t" style="left:4.0px;top:5.26px;font-size:18px;line-height:18px;color:#3c3c3c;transform:scaleX(1.037);">New peer for interface Fa0/1 i</div></div>
<div class="b" style="left:1249.5px;top:638.0px;width:250.0px;height:26.0px;overflow:hidden;"><div class="t" style="left:4.5px;top:5.26px;font-size:18px;line-height:18px;color:#3c3c3c;"></div></div>
<div class="b" style="left:1499.5px;top:638.0px;width:396.0px;height:26.0px;overflow:hidden;"><div class="t" style="left:4.5px;top:5.26px;font-size:18px;line-height:18px;color:#3c3c3c;transform:scaleX(0.960);">0</div></div>
<div class="b" style="left:48.0px;top:664.0px;width:81.5px;height:26.0px;overflow:hidden;"><div class="t" style="left:6.4px;top:5.26px;font-size:18px;line-height:18px;color:#3c3c3c;transform:scaleX(0.960);">19590</div></div>
<div class="b" style="left:129.5px;top:664.0px;width:120.0px;height:26.0px;overflow:hidden;"><div class="t" style="left:4.5px;top:5.26px;font-size:18px;line-height:18px;color:#3c3c3c;transform:scaleX(0.973);">06.01.2023 19</div></div>
<div class="b" style="left:249.5px;top:664.0px;width:120.0px;height:26.0px;overflow:hidden;"><div class="t" style="left:4.5px;top:5.26px;font-size:18px;line-height:18px;color:#3c3c3c;transform:scaleX(0.973);">06.01.2023 19</div></div>
<div class="b" style="left:369.5px;top:664.0px;width:100.0px;height:26.0px;overflow:hidden;"><div class="t" style="left:4.0px;top:5.26px;font-size:18px;line-height:18px;color:#3c3c3c;transform:scaleX(0.979);">System</div></div>
<div class="b" style="left:469.5px;top:664.0px;width:150.0px;height:26.0px;overflow:hidden;"><div class="t" style="left:20.5px;top:5.26px;font-size:18px;line-height:18px;color:#3c3c3c;transform:scaleX(0.960);">10.5.90.31</div></div>
<svg class="b" style="left:471.0px;top:669.5px" width="16" height="16" viewBox="0 0 16 16"><rect x="6.5" y="0.5" width="9" height="13" fill="#e9e9e9" stroke="#8d8d8d"/><rect x="0.5" y="3.5" width="11" height="9" fill="#f3f3f3" stroke="#8d8d8d"/><rect x="2" y="5" width="8" height="6" fill="#6f8fd0"/><rect x="12.5" y="5" width="2" height="1.5" fill="#6cb85a"/><rect x="3.5" y="13" width="5" height="2.5" fill="#dcdcdc" stroke="#8d8d8d" stroke-width="0.8"/></svg>
<div class="b" style="left:619.5px;top:664.0px;width:100.0px;height:26.0px;overflow:hidden;"><div class="t" style="left:4.5px;top:5.26px;font-size:18px;line-height:18px;color:#3c3c3c;transform:scaleX(1.099);">Default</div></div>
<div class="b" style="left:719.5px;top:664.0px;width:80.0px;height:26.0px;overflow:hidden;"><div class="t" style="left:4.5px;top:5.26px;font-size:18px;line-height:18px;color:#3c3c3c;">0</div></div>
<div class="b" style="left:799.5px;top:664.0px;width:100.0px;height:26.0px;overflow:hidden;"><div class="t" style="left:3.6px;top:5.26px;font-size:18px;line-height:18px;color:#3c3c3c;transform:scaleX(0.920);">SYS_IF_PEER_CHANGED</div></div>
<div class="b" style="left:899.5px;top:664.0px;width:100.0px;height:26.0px;overflow:hidden;"><div class="t" style="left:20.4px;top:5.26px;font-size:18px;line-height:18px;color:#3c3c3c;transform:scaleX(1.044);">Normal</div></div>
<svg class="b" style="left:902.0px;top:670.0px" width="14" height="14" viewBox="0 0 14 14"><defs><radialGradient id="cg664" cx="0.4" cy="0.3" r="0.8"><stop offset="0" stop-color="#8ad47e"/><stop offset="1" stop-color="#3ea836"/></radialGradient></defs><circle cx="7" cy="7" r="6.4" fill="url(#cg664)" stroke="#2f8a2a" stroke-width="1"/><circle cx="7" cy="7" r="5.2" fill="none" stroke="#b8e8b0" stroke-width="0.7" opacity="0.7"/><path d="M3.8 7.2L6.1 9.4L10.4 5" stroke="#fff" stroke-width="2" fill="none"/></svg>
<div class="b" style="left:999.5px;top:664.0px;width:250.0px;height:26.0px;overflow:hidden;"><div class="t" style="left:4.0px;top:5.26px;font-size:18px;line-height:18px;color:#3c3c3c;transform:scaleX(1.037);">New peer for interface Se1/2 i</div></div>
<div class="b" style="left:1249.5px;top:664.0px;width:250.0px;height:26.0px;overflow:hidden;"><div class="t" style="left:4.5px;top:5.26px;font-size:18px;line-height:18px;color:#3c3c3c;"></div></div>
<div class="b" style="left:1499.5px;top:664.0px;width:396.0px;height:26.0px;overflow:hidden;"><div class="t" style="left:4.5px;top:5.26px;font-size:18px;line-height:18px;color:#3c3c3c;transform:scaleX(0.960);">0</div></div>
<div class="b" style="left:48.0px;top:690.0px;width:81.5px;height:26.0px;overflow:hidden;"><div class="t" style="left:6.4px;top:5.26px;font-size:18px;line-height:18px;color:#3c3c3c;transform:scaleX(0.960);">19585</div></div>
<div class="b" style="left:129.5px;top:690.0px;width:120.0px;height:26.0px;overflow:hidden;"><div class="t" style="left:4.5px;top:5.26px;font-size:18px;line-height:18px;color:#3c3c3c;transform:scaleX(0.973);">06.01.2023 19</div></div>
<div class="b" style="left:249.5px;top:690.0px;width:120.0px;height:26.0px;overflow:hidden;"><div class="t" style="left:4.5px;top:5.26px;font-size:18px;line-height:18px;color:#3c3c3c;transform:scaleX(0.973);">06.01.2023 19</div></div>
<div class="b" style="left:369.5px;top:690.0px;width:100.0px;height:26.0px;overflow:hidden;"><div class="t" style="left:4.0px;top:5.26px;font-size:18px;line-height:18px;color:#3c3c3c;transform:scaleX(0.979);">System</div></div>
<div class="b" style="left:469.5px;top:690.0px;width:150.0px;height:26.0px;overflow:hidden;"><div class="t" style="left:20.5px;top:5.26px;font-size:18px;line-height:18px;color:#3c3c3c;transform:scaleX(0.960);">10.5.90.39</div></div>
<svg class="b" style="left:471.0px;top:695.5px" width="16" height="16" viewBox="0 0 16 16"><rect x="6.5" y="0.5" width="9" height="13" fill="#e9e9e9" stroke="#8d8d8d"/><rect x="0.5" y="3.5" width="11" height="9" fill="#f3f3f3" stroke="#8d8d8d"/><rect x="2" y="5" width="8" height="6" fill="#6f8fd0"/><rect x="12.5" y="5" width="2" height="1.5" fill="#6cb85a"/><rect x="3.5" y="13" width="5" height="2.5" fill="#dcdcdc" stroke="#8d8d8d" stroke-width="0.8"/></svg>
<div class="b" style="left:619.5px;top:690.0px;width:100.0px;height:26.0px;overflow:hidden;"><div class="t" style="left:4.5px;top:5.26px;font-size:18px;line-height:18px;color:#3c3c3c;transform:scaleX(1.099);">Default</div></div>
<div class="b" style="left:719.5px;top:690.0px;width:80.0px;height:26.0px;overflow:hidden;"><div class="t" style="left:4.5px;top:5.26px;font-size:18px;line-height:18px;color:#3c3c3c;">0</div></div>
<div class="b" style="left:799.5px;top:690.0px;width:100.0px;height:26.0px;overflow:hidden;"><div class="t" style="left:3.6px;top:5.26px;font-size:18px;line-height:18px;color:#3c3c3c;transform:scaleX(0.920);">SYS_IF_PEER_CHANGED</div></div>
<div class="b" style="left:899.5px;top:690.0px;width:100.0px;height:26.0px;overflow:hidden;"><div class="t" style="left:20.4px;top:5.26px;font-size:18px;line-height:18px;color:#3c3c3c;transform:scaleX(1.044);">Normal</div></div>
<svg class="b" style="left:902.0px;top:696.0px" width="14" height="14" viewBox="0 0 14 14"><defs><radialGradient id="cg690" cx="0.4" cy="0.3" r="0.8"><stop offset="0" stop-color="#8ad47e"/><stop offset="1" stop-color="#3ea836"/></radialGradient></defs><circle cx="7" cy="7" r="6.4" fill="url(#cg690)" stroke="#2f8a2a" stroke-width="1"/><circle cx="7" cy="7" r="5.2" fill="none" stroke="#b8e8b0" stroke-width="0.7" opacity="0.7"/><path d="M3.8 7.2L6.1 9.4L10.4 5" stroke="#fff" stroke-width="2" fill="none"/></svg>
<div class="b" style="left:999.5px;top:690.0px;width:250.0px;height:26.0px;overflow:hidden;"><div class="t" style="left:4.0px;top:5.26px;font-size:18px;line-height:18px;color:#3c3c3c;transform:scaleX(1.037);">New peer for interface Fa0/0 i</div></div>
<div class="b" style="left:1249.5px;top:690.0px;width:250.0px;height:26.0px;overflow:hidden;"><div class="t" style="left:4.5px;top:5.26px;font-size:18px;line-height:18px;color:#3c3c3c;"></div></div>
<div class="b" style="left:1499.5px;top:690.0px;width:396.0px;height:26.0px;overflow:hidden;"><div class="t" style="left:4.5px;top:5.26px;font-size:18px;line-height:18px;color:#3c3c3c;transform:scaleX(0.960);">0</div></div>
<div class="b" style="left:48.0px;top:716.0px;width:81.5px;height:26.0px;overflow:hidden;"><div class="t" style="left:6.4px;top:5.26px;font-size:18px;line-height:18px;color:#3c3c3c;transform:scaleX(0.960);">19588</div></div>
<div class="b" style="left:129.5px;top:716.0px;width:120.0px;height:26.0px;overflow:hidden;"><div class="t" style="left:4.5px;top:5.26px;font-size:18px;line-height:18px;color:#3c3c3c;transform:scaleX(0.973);">06.01.2023 19</div></div>
<div class="b" style="left:249.5px;top:716.0px;width:120.0px;height:26.0px;overflow:hidden;"><div class="t" style="left:4.5px;top:5.26px;font-size:18px;line-height:18px;color:#3c3c3c;transform:scaleX(0.973);">06.01.2023 19</div></div>
<div class="b" style="left:369.5px;top:716.0px;width:100.0px;height:26.0px;overflow:hidden;"><div class="t" style="left:4.0px;top:5.26px;font-size:18px;line-height:18px;color:#3c3c3c;transform:scaleX(0.979);">System</div></div>
<div class="b" style="left:469.5px;top:716.0px;width:150.0px;height:26.0px;overflow:hidden;"><div class="t" style="left:20.5px;top:5.26px;font-size:18px;line-height:18px;color:#3c3c3c;transform:scaleX(0.960);">R11</div></div>
<svg class="b" style="left:471.0px;top:721.5px" width="16" height="16" viewBox="0 0 16 16"><rect x="6.5" y="0.5" width="9" height="13" fill="#e9e9e9" stroke="#8d8d8d"/><rect x="0.5" y="3.5" width="11" height="9" fill="#f3f3f3" stroke="#8d8d8d"/><rect x="2" y="5" width="8" height="6" fill="#6f8fd0"/><rect x="12.5" y="5" width="2" height="1.5" fill="#6cb85a"/><rect x="3.5" y="13" width="5" height="2.5" fill="#dcdcdc" stroke="#8d8d8d" stroke-width="0.8"/></svg>
<div class="b" style="left:619.5px;top:716.0px;width:100.0px;height:26.0px;overflow:hidden;"><div class="t" style="left:4.5px;top:5.26px;font-size:18px;line-height:18px;color:#3c3c3c;transform:scaleX(1.099);">Default</div></div>
<div class="b" style="left:719.5px;top:716.0px;width:80.0px;height:26.0px;overflow:hidden;"><div class="t" style="left:4.5px;top:5.26px;font-size:18px;line-height:18px;color:#3c3c3c;">0</div></div>
<div class="b" style="left:799.5px;top:716.0px;width:100.0px;height:26.0px;overflow:hidden;"><div class="t" style="left:3.6px;top:5.26px;font-size:18px;line-height:18px;color:#3c3c3c;transform:scaleX(0.920);">SYS_IF_PEER_CHANGED</div></div>
<div class="b" style="left:899.5px;top:716.0px;width:100.0px;height:26.0px;overflow:hidden;"><div class="t" style="left:20.4px;top:5.26px;font-size:18px;line-height:18px;color:#3c3c3c;transform:scaleX(1.044);">Normal</div></div>
<svg class="b" style="left:902.0px;top:722.0px" width="14" height="14" viewBox="0 0 14 14"><defs><radialGradient id="cg716" cx="0.4" cy="0.3" r="0.8"><stop offset="0" stop-color="#8ad47e"/><stop offset="1" stop-color="#3ea836"/></radialGradient></defs><circle cx="7" cy="7" r="6.4" fill="url(#cg716)" stroke="#2f8a2a" stroke-width="1"/><circle cx="7" cy="7" r="5.2" fill="none" stroke="#b8e8b0" stroke-width="0.7" opacity="0.7"/><path d="M3.8 7.2L6.1 9.4L10.4 5" stroke="#fff" stroke-width="2" fill="none"/></svg>
<div class="b" style="left:999.5px;top:716.0px;width:250.0px;height:26.0px;overflow:hidden;"><div class="t" style="left:4.0px;top:5.26px;font-size:18px;line-height:18px;color:#3c3c3c;transform:scaleX(1.037);">New peer for interface Fa0/0 i</div></div>
<div class="b" style="left:1249.5px;top:716.0px;width:250.0px;height:26.0px;overflow:hidden;"><div class="t" style="left:4.5px;top:5.26px;font-size:18px;line-height:18px;color:#3c3c3c;"></div></div>
<div class="b" style="left:1499.5px;top:716.0px;width:396.0px;height:26.0px;overflow:hidden;"><div class="t" style="left:4.5px;top:5.26px;font-size:18px;line-height:18px;color:#3c3c3c;transform:scaleX(0.960);">0</div></div>
<div class="b" style="left:48.0px;top:742.0px;width:81.5px;height:26.0px;overflow:hidden;"><div class="t" style="left:6.4px;top:5.26px;font-size:18px;line-height:18px;color:#3c3c3c;transform:scaleX(0.960);">19589</div></div>
<div class="b" style="left:129.5px;top:742.0px;width:120.0px;height:26.0px;overflow:hidden;"><div class="t" style="left:4.5px;top:5.26px;font-size:18px;line-height:18px;color:#3c3c3c;transform:scaleX(0.973);">06.01.2023 19</div></div>
<div class="b" style="left:249.5px;top:742.0px;width:120.0px;height:26.0px;overflow:hidden;"><div class="t" style="left:4.5px;top:5.26px;font-size:18px;line-height:18px;color:#3c3c3c;transform:scaleX(0.973);">06.01.2023 19</div></div>
<div class="b" style="left:369.5px;top:742.0px;width:100.0px;height:26.0px;overflow:hidden;"><div class="t" style="left:4.0px;top:5.26px;font-size:18px;line-height:18px;color:#3c3c3c;transform:scaleX(0.979);">System</div></div>
<div class="b" style="left:469.5px;top:742.0px;width:150.0px;height:26.0px;overflow:hidden;"><div class="t" style="left:20.5px;top:5.26px;font-size:18px;line-height:18px;color:#3c3c3c;transform:scaleX(0.960);">10.5.90.39</div></div>
<svg class="b" style="left:471.0px;top:747.5px" width="16" height="16" viewBox="0 0 16 16"><rect x="6.5" y="0.5" width="9" height="13" fill="#e9e9e9" stroke="#8d8d8d"/><rect x="0.5" y="3.5" width="11" height="9" fill="#f3f3f3" stroke="#8d8d8d"/><rect x="2" y="5" width="8" height="6" fill="#6f8fd0"/><rect x="12.5" y="5" width="2" height="1.5" fill="#6cb85a"/><rect x="3.5" y="13" width="5" height="2.5" fill="#dcdcdc" stroke="#8d8d8d" stroke-width="0.8"/></svg>
<div class="b" style="left:619.5px;top:742.0px;width:100.0px;height:26.0px;overflow:hidden;"><div class="t" style="left:4.5px;top:5.26px;font-size:18px;line-height:18px;color:#3c3c3c;transform:scaleX(1.099);">Default</div></div>
<div class="b" style="left:719.5px;top:742.0px;width:80.0px;height:26.0px;overflow:hidden;"><div class="t" style="left:4.5px;top:5.26px;font-size:18px;line-height:18px;color:#3c3c3c;">0</div></div>
<div class="b" style="left:799.5px;top:742.0px;width:100.0px;height:26.0px;overflow:hidden;"><div class="t" style="left:3.6px;top:5.26px;font-size:18px;line-height:18px;color:#3c3c3c;transform:scaleX(0.920);">SYS_IF_PEER_CHANGED</div></div>
<div class="b" style="left:899.5px;top:742.0px;width:100.0px;height:26.0px;overflow:hidden;"><div class="t" style="left:20.4px;top:5.26px;font-size:18px;line-height:18px;color:#3c3c3c;transform:scaleX(1.044);">Normal</div></div>
<svg class="b" style="left:902.0px;top:748.0px" width="14" height="14" viewBox="0 0 14 14"><defs><radialGradient id="cg742" cx="0.4" cy="0.3" r="0.8"><stop offset="0" stop-color="#8ad47e"/><stop offset="1" stop-color="#3ea836"/></radialGradient></defs><circle cx="7" cy="7" r="6.4" fill="url(#cg742)" stroke="#2f8a2a" stroke-width="1"/><circle cx="7" cy="7" r="5.2" fill="none" stroke="#b8e8b0" stroke-width="0.7" opacity="0.7"/><path d="M3.8 7.2L6.1 9.4L10.4 5" stroke="#fff" stroke-width="2" fill="none"/></svg>
<div class="b" style="left:999.5px;top:742.0px;width:250.0px;height:26.0px;overflow:hidden;"><div class="t" style="left:4.0px;top:5.26px;font-size:18px;line-height:18px;color:#3c3c3c;transform:scaleX(1.037);">New peer for interface Se1/0 i</div></div>
<div class="b" style="left:1249.5px;top:742.0px;width:250.0px;height:26.0px;overflow:hidden;"><div class="t" style="left:4.5px;top:5.26px;font-size:18px;line-height:18px;color:#3c3c3c;"></div></div>
<div class="b" style="left:1499.5px;top:742.0px;width:396.0px;height:26.0px;overflow:hidden;"><div class="t" style="left:4.5px;top:5.26px;font-size:18px;line-height:18px;color:#3c3c3c;transform:scaleX(0.960);">0</div></div>
<div class="b" style="left:48.0px;top:768.0px;width:81.5px;height:26.0px;overflow:hidden;"><div class="t" style="left:6.4px;top:5.26px;font-size:18px;line-height:18px;color:#3c3c3c;transform:scaleX(0.960);">19587</div></div>
<div class="b" style="left:129.5px;top:768.0px;width:120.0px;height:26.0px;overflow:hidden;"><div class="t" style="left:4.5px;top:5.26px;font-size:18px;line-height:18px;color:#3c3c3c;transform:scaleX(0.973);">06.01.2023 19</div></div>
<div class="b" style="left:249.5px;top:768.0px;width:120.0px;height:26.0px;overflow:hidden;"><div class="t" style="left:4.5px;top:5.26px;font-size:18px;line-height:18px;color:#3c3c3c;transform:scaleX(0.973);">06.01.2023 19</div></div>
<div class="b" style="left:369.5px;top:768.0px;width:100.0px;height:26.0px;overflow:hidden;"><div class="t" style="left:4.0px;top:5.26px;font-size:18px;line-height:18px;color:#3c3c3c;transform:scaleX(0.979);">System</div></div>
<div class="b" style="left:469.5px;top:768.0px;width:150.0px;height:26.0px;overflow:hidden;"><div class="t" style="left:20.5px;top:5.26px;font-size:18px;line-height:18px;color:#3c3c3c;transform:scaleX(0.960);">10.5.90.39</div></div>
<svg class="b" style="left:471.0px;top:773.5px" width="16" height="16" viewBox="0 0 16 16"><rect x="6.5" y="0.5" width="9" height="13" fill="#e9e9e9" stroke="#8d8d8d"/><rect x="0.5" y="3.5" width="11" height="9" fill="#f3f3f3" stroke="#8d8d8d"/><rect x="2" y="5" width="8" height="6" fill="#6f8fd0"/><rect x="12.5" y="5" width="2" height="1.5" fill="#6cb85a"/><rect x="3.5" y="13" width="5" height="2.5" fill="#dcdcdc" stroke="#8d8d8d" stroke-width="0.8"/></svg>
<div class="b" style="left:619.5px;top:768.0px;width:100.0px;height:26.0px;overflow:hidden;"><div class="t" style="left:4.5px;top:5.26px;font-size:18px;line-height:18px;color:#3c3c3c;transform:scaleX(1.099);">Default</div></div>
<div class="b" style="left:719.5px;top:768.0px;width:80.0px;height:26.0px;overflow:hidden;"><div class="t" style="left:4.5px;top:5.26px;font-size:18px;line-height:18px;color:#3c3c3c;">0</div></div>
<div class="b" style="left:799.5px;top:768.0px;width:100.0px;height:26.0px;overflow:hidden;"><div class="t" style="left:3.6px;top:5.26px;font-size:18px;line-height:18px;color:#3c3c3c;transform:scaleX(0.920);">SYS_IF_PEER_CHANGED</div></div>
<div class="b" style="left:899.5px;top:768.0px;width:100.0px;height:26.0px;overflow:hidden;"><div class="t" style="left:20.4px;top:5.26px;font-size:18px;line-height:18px;color:#3c3c3c;transform:scaleX(1.044);">Normal</div></div>
<svg class="b" style="left:902.0px;top:774.0px" width="14" height="14" viewBox="0 0 14 14"><defs><radialGradient id="cg768" cx="0.4" cy="0.3" r="0.8"><stop offset="0" stop-color="#8ad47e"/><stop offset="1" stop-color="#3ea836"/></radialGradient></defs><circle cx="7" cy="7" r="6.4" fill="url(#cg768)" stroke="#2f8a2a" stroke-width="1"/><circle cx="7" cy="7" r="5.2" fill="none" stroke="#b8e8b0" stroke-width="0.7" opacity="0.7"/><path d="M3.8 7.2L6.1 9.4L10.4 5" stroke="#fff" stroke-width="2" fill="none"/></svg>
<div class="b" style="left:999.5px;top:768.0px;width:250.0px;height:26.0px;overflow:hidden;"><div class="t" style="left:4.0px;top:5.26px;font-size:18px;line-height:18px;color:#3c3c3c;transform:scaleX(1.037);">New peer for interface Fa0/1 i</div></div>
<div class="b" style="left:1249.5px;top:768.0px;width:250.0px;height:26.0px;overflow:hidden;"><div class="t" style="left:4.5px;top:5.26px;font-size:18px;line-height:18px;color:#3c3c3c;"></div></div>
<div class="b" style="left:1499.5px;top:768.0px;width:396.0px;height:26.0px;overflow:hidden;"><div class="t" style="left:4.5px;top:5.26px;font-size:18px;line-height:18px;color:#3c3c3c;transform:scaleX(0.960);">0</div></div>
<div class="b" style="left:50px;top:794px;width:1845px;height:26px;background:#85a657;"></div>
<div class="b" style="left:48.0px;top:794.0px;width:81.5px;height:26.0px;overflow:hidden;"><div class="t" style="left:6.4px;top:5.26px;font-size:18px;line-height:18px;color:#f2f5e6;transform:scaleX(0.960);">19586</div></div>
<div class="b" style="left:129.5px;top:794.0px;width:120.0px;height:26.0px;overflow:hidden;"><div class="t" style="left:4.5px;top:5.26px;font-size:18px;line-height:18px;color:#f2f5e6;transform:scaleX(0.973);">06.01.2023 19</div></div>
<div class="b" style="left:249.5px;top:794.0px;width:120.0px;height:26.0px;overflow:hidden;"><div class="t" style="left:4.5px;top:5.26px;font-size:18px;line-height:18px;color:#f2f5e6;transform:scaleX(0.973);">06.01.2023 19</div></div>
<div class="b" style="left:369.5px;top:794.0px;width:100.0px;height:26.0px;overflow:hidden;"><div class="t" style="left:4.0px;top:5.26px;font-size:18px;line-height:18px;color:#f2f5e6;transform:scaleX(0.979);">System</div></div>
<div class="b" style="left:469.5px;top:794.0px;width:150.0px;height:26.0px;overflow:hidden;"><div class="t" style="left:20.5px;top:5.26px;font-size:18px;line-height:18px;color:#f2f5e6;transform:scaleX(0.960);">10.5.90.15</div></div>
<svg class="b" style="left:471.0px;top:799.5px" width="16" height="16" viewBox="0 0 16 16"><rect x="6.5" y="0.5" width="9" height="13" fill="#e9e9e9" stroke="#8d8d8d"/><rect x="0.5" y="3.5" width="11" height="9" fill="#f3f3f3" stroke="#8d8d8d"/><rect x="2" y="5" width="8" height="6" fill="#6f8fd0"/><rect x="12.5" y="5" width="2" height="1.5" fill="#6cb85a"/><rect x="3.5" y="13" width="5" height="2.5" fill="#dcdcdc" stroke="#8d8d8d" stroke-width="0.8"/></svg>
<div class="b" style="left:619.5px;top:794.0px;width:100.0px;height:26.0px;overflow:hidden;"><div class="t" style="left:4.5px;top:5.26px;font-size:18px;line-height:18px;color:#f2f5e6;transform:scaleX(1.099);">Default</div></div>
<div class="b" style="left:719.5px;top:794.0px;width:80.0px;height:26.0px;overflow:hidden;"><div class="t" style="left:4.5px;top:5.26px;font-size:18px;line-height:18px;color:#f2f5e6;">0</div></div>
<div class="b" style="left:799.5px;top:794.0px;width:100.0px;height:26.0px;overflow:hidden;"><div class="t" style="left:3.6px;top:5.26px;font-size:18px;line-height:18px;color:#f2f5e6;transform:scaleX(0.920);">SYS_IF_PEER_CHANGED</div></div>
<div class="b" style="left:899.5px;top:794.0px;width:100.0px;height:26.0px;overflow:hidden;"><div class="t" style="left:20.4px;top:5.26px;font-size:18px;line-height:18px;color:#f2f5e6;transform:scaleX(1.044);">Normal</div></div>
<svg class="b" style="left:902.0px;top:800.0px" width="14" height="14" viewBox="0 0 14 14"><defs><radialGradient id="cg794" cx="0.4" cy="0.3" r="0.8"><stop offset="0" stop-color="#8ad47e"/><stop offset="1" stop-color="#3ea836"/></radialGradient></defs><circle cx="7" cy="7" r="6.4" fill="url(#cg794)" stroke="#2f8a2a" stroke-width="1"/><circle cx="7" cy="7" r="5.2" fill="none" stroke="#b8e8b0" stroke-width="0.7" opacity="0.7"/><path d="M3.8 7.2L6.1 9.4L10.4 5" stroke="#fff" stroke-width="2" fill="none"/></svg>
<div class="b" style="left:999.5px;top:794.0px;width:250.0px;height:26.0px;overflow:hidden;"><div class="t" style="left:4.0px;top:5.26px;font-size:18px;line-height:18px;color:#f2f5e6;transform:scaleX(1.037);">New peer for interface Fa2/0 i</div></div>
<div class="b" style="left:1249.5px;top:794.0px;width:250.0px;height:26.0px;overflow:hidden;"><div class="t" style="left:4.5px;top:5.26px;font-size:18px;line-height:18px;color:#f2f5e6;"></div></div>
<div class="b" style="left:1499.5px;top:794.0px;width:396.0px;height:26.0px;overflow:hidden;"><div class="t" style="left:4.5px;top:5.26px;font-size:18px;line-height:18px;color:#f2f5e6;transform:scaleX(0.960);">0</div></div>
<div class="b" style="left:48.0px;top:820.0px;width:81.5px;height:26.0px;overflow:hidden;"><div class="t" style="left:6.4px;top:5.26px;font-size:18px;line-height:18px;color:#3c3c3c;transform:scaleX(0.960);">19582</div></div>
<div class="b" style="left:129.5px;top:820.0px;width:120.0px;height:26.0px;overflow:hidden;"><div class="t" style="left:4.5px;top:5.26px;font-size:18px;line-height:18px;color:#3c3c3c;transform:scaleX(0.973);">06.01.2023 19</div></div>
<div class="b" style="left:249.5px;top:820.0px;width:120.0px;height:26.0px;overflow:hidden;"><div class="t" style="left:4.5px;top:5.26px;font-size:18px;line-height:18px;color:#3c3c3c;transform:scaleX(0.973);">06.01.2023 19</div></div>
<div class="b" style="left:369.5px;top:820.0px;width:100.0px;height:26.0px;overflow:hidden;"><div class="t" style="left:4.0px;top:5.26px;font-size:18px;line-height:18px;color:#3c3c3c;transform:scaleX(0.979);">System</div></div>
<div class="b" style="left:469.5px;top:820.0px;width:150.0px;height:26.0px;overflow:hidden;"><div class="t" style="left:20.5px;top:5.26px;font-size:18px;line-height:18px;color:#3c3c3c;transform:scaleX(0.960);">R11</div></div>
<svg class="b" style="left:471.0px;top:825.5px" width="16" height="16" viewBox="0 0 16 16"><rect x="6.5" y="0.5" width="9" height="13" fill="#e9e9e9" stroke="#8d8d8d"/><rect x="0.5" y="3.5" width="11" height="9" fill="#f3f3f3" stroke="#8d8d8d"/><rect x="2" y="5" width="8" height="6" fill="#6f8fd0"/><rect x="12.5" y="5" width="2" height="1.5" fill="#6cb85a"/><rect x="3.5" y="13" width="5" height="2.5" fill="#dcdcdc" stroke="#8d8d8d" stroke-width="0.8"/></svg>
<div class="b" style="left:619.5px;top:820.0px;width:100.0px;height:26.0px;overflow:hidden;"><div class="t" style="left:4.5px;top:5.26px;font-size:18px;line-height:18px;color:#3c3c3c;transform:scaleX(1.099);">Default</div></div>
<div class="b" style="left:719.5px;top:820.0px;width:80.0px;height:26.0px;overflow:hidden;"><div class="t" style="left:4.5px;top:5.26px;font-size:18px;line-height:18px;color:#3c3c3c;">0</div></div>
<div class="b" style="left:799.5px;top:820.0px;width:100.0px;height:26.0px;overflow:hidden;"><div class="t" style="left:3.6px;top:5.26px;font-size:18px;line-height:18px;color:#3c3c3c;transform:scaleX(0.920);">SYS_IF_PEER_CHANGED</div></div>
<div class="b" style="left:899.5px;top:820.0px;width:100.0px;height:26.0px;overflow:hidden;"><div class="t" style="left:20.4px;top:5.26px;font-size:18px;line-height:18px;color:#3c3c3c;transform:scaleX(1.044);">Normal</div></div>
<svg class="b" style="left:902.0px;top:826.0px" width="14" height="14" viewBox="0 0 14 14"><defs><radialGradient id="cg820" cx="0.4" cy="0.3" r="0.8"><stop offset="0" stop-color="#8ad47e"/><stop offset="1" stop-color="#3ea836"/></radialGradient></defs><circle cx="7" cy="7" r="6.4" fill="url(#cg820)" stroke="#2f8a2a" stroke-width="1"/><circle cx="7" cy="7" r="5.2" fill="none" stroke="#b8e8b0" stroke-width="0.7" opacity="0.7"/><path d="M3.8 7.2L6.1 9.4L10.4 5" stroke="#fff" stroke-width="2" fill="none"/></svg>
<div class="b" style="left:999.5px;top:820.0px;width:250.0px;height:26.0px;overflow:hidden;"><div class="t" style="left:4.0px;top:5.26px;font-size:18px;line-height:18px;color:#3c3c3c;transform:scaleX(1.037);">New peer for interface Fa0/0 i</div></div>
<div class="b" style="left:1249.5px;top:820.0px;width:250.0px;height:26.0px;overflow:hidden;"><div class="t" style="left:4.5px;top:5.26px;font-size:18px;line-height:18px;color:#3c3c3c;"></div></div>
<div class="b" style="left:1499.5px;top:820.0px;width:396.0px;height:26.0px;overflow:hidden;"><div class="t" style="left:4.5px;top:5.26px;font-size:18px;line-height:18px;color:#3c3c3c;transform:scaleX(0.960);">0</div></div>
<div class="b" style="left:48.0px;top:846.0px;width:81.5px;height:26.0px;overflow:hidden;"><div class="t" style="left:6.4px;top:5.26px;font-size:18px;line-height:18px;color:#3c3c3c;transform:scaleX(0.960);">19583</div></div>
<div class="b" style="left:129.5px;top:846.0px;width:120.0px;height:26.0px;overflow:hidden;"><div class="t" style="left:4.5px;top:5.26px;font-size:18px;line-height:18px;color:#3c3c3c;transform:scaleX(0.973);">06.01.2023 19</div></div>
<div class="b" style="left:249.5px;top:846.0px;width:120.0px;height:26.0px;overflow:hidden;"><div class="t" style="left:4.5px;top:5.26px;font-size:18px;line-height:18px;color:#3c3c3c;transform:scaleX(0.973);">06.01.2023 19</div></div>
<div class="b" style="left:369.5px;top:846.0px;width:100.0px;height:26.0px;overflow:hidden;"><div class="t" style="left:4.0px;top:5.26px;font-size:18px;line-height:18px;color:#3c3c3c;transform:scaleX(0.979);">System</div></div>
<div class="b" style="left:469.5px;top:846.0px;width:150.0px;height:26.0px;overflow:hidden;"><div class="t" style="left:20.5px;top:5.26px;font-size:18px;line-height:18px;color:#3c3c3c;transform:scaleX(0.960);">10.5.90.35</div></div>
<svg class="b" style="left:471.0px;top:851.5px" width="16" height="16" viewBox="0 0 16 16"><rect x="6.5" y="0.5" width="9" height="13" fill="#e9e9e9" stroke="#8d8d8d"/><rect x="0.5" y="3.5" width="11" height="9" fill="#f3f3f3" stroke="#8d8d8d"/><rect x="2" y="5" width="8" height="6" fill="#6f8fd0"/><rect x="12.5" y="5" width="2" height="1.5" fill="#6cb85a"/><rect x="3.5" y="13" width="5" height="2.5" fill="#dcdcdc" stroke="#8d8d8d" stroke-width="0.8"/></svg>
<div class="b" style="left:619.5px;top:846.0px;width:100.0px;height:26.0px;overflow:hidden;"><div class="t" style="left:4.5px;top:5.26px;font-size:18px;line-height:18px;color:#3c3c3c;transform:scaleX(1.099);">Default</div></div>
<div class="b" style="left:719.5px;top:846.0px;width:80.0px;height:26.0px;overflow:hidden;"><div class="t" style="left:4.5px;top:5.26px;font-size:18px;line-height:18px;color:#3c3c3c;">0</div></div>
<div class="b" style="left:799.5px;top:846.0px;width:100.0px;height:26.0px;overflow:hidden;"><div class="t" style="left:3.6px;top:5.26px;font-size:18px;line-height:18px;color:#3c3c3c;transform:scaleX(0.920);">SYS_IF_PEER_CHANGED</div></div>
<div class="b" style="left:899.5px;top:846.0px;width:100.0px;height:26.0px;overflow:hidden;"><div class="t" style="left:20.4px;top:5.26px;font-size:18px;line-height:18px;color:#3c3c3c;transform:scaleX(1.044);">Normal</div></div>
<svg class="b" style="left:902.0px;top:852.0px" width="14" height="14" viewBox="0 0 14 14"><defs><radialGradient id="cg846" cx="0.4" cy="0.3" r="0.8"><stop offset="0" stop-color="#8ad47e"/><stop offset="1" stop-color="#3ea836"/></radialGradient></defs><circle cx="7" cy="7" r="6.4" fill="url(#cg846)" stroke="#2f8a2a" stroke-width="1"/><circle cx="7" cy="7" r="5.2" fill="none" stroke="#b8e8b0" stroke-width="0.7" opacity="0.7"/><path d="M3.8 7.2L6.1 9.4L10.4 5" stroke="#fff" stroke-width="2" fill="none"/></svg>
<div class="b" style="left:999.5px;top:846.0px;width:250.0px;height:26.0px;overflow:hidden;"><div class="t" style="left:4.0px;top:5.26px;font-size:18px;line-height:18px;color:#3c3c3c;transform:scaleX(1.037);">New peer for interface Se1/0 i</div></div>
<div class="b" style="left:1249.5px;top:846.0px;width:250.0px;height:26.0px;overflow:hidden;"><div class="t" style="left:4.5px;top:5.26px;font-size:18px;line-height:18px;color:#3c3c3c;"></div></div>
<div class="b" style="left:1499.5px;top:846.0px;width:396.0px;height:26.0px;overflow:hidden;"><div class="t" style="left:4.5px;top:5.26px;font-size:18px;line-height:18px;color:#3c3c3c;transform:scaleX(0.960);">0</div></div>
<div class="b" style="left:48.0px;top:872.0px;width:81.5px;height:26.0px;overflow:hidden;"><div class="t" style="left:6.4px;top:5.26px;font-size:18px;line-height:18px;color:#3c3c3c;transform:scaleX(0.960);">19580</div></div>
<div class="b" style="left:129.5px;top:872.0px;width:120.0px;height:26.0px;overflow:hidden;"><div class="t" style="left:4.5px;top:5.26px;font-size:18px;line-height:18px;color:#3c3c3c;transform:scaleX(0.973);">06.01.2023 19</div></div>
<div class="b" style="left:249.5px;top:872.0px;width:120.0px;height:26.0px;overflow:hidden;"><div class="t" style="left:4.5px;top:5.26px;font-size:18px;line-height:18px;color:#3c3c3c;transform:scaleX(0.973);">06.01.2023 19</div></div>
<div class="b" style="left:369.5px;top:872.0px;width:100.0px;height:26.0px;overflow:hidden;"><div class="t" style="left:4.0px;top:5.26px;font-size:18px;line-height:18px;color:#3c3c3c;transform:scaleX(0.979);">System</div></div>
<div class="b" style="left:469.5px;top:872.0px;width:150.0px;height:26.0px;overflow:hidden;"><div class="t" style="left:20.5px;top:5.26px;font-size:18px;line-height:18px;color:#3c3c3c;transform:scaleX(0.960);">10.5.90.15</div></div>
<svg class="b" style="left:471.0px;top:877.5px" width="16" height="16" viewBox="0 0 16 16"><rect x="6.5" y="0.5" width="9" height="13" fill="#e9e9e9" stroke="#8d8d8d"/><rect x="0.5" y="3.5" width="11" height="9" fill="#f3f3f3" stroke="#8d8d8d"/><rect x="2" y="5" width="8" height="6" fill="#6f8fd0"/><rect x="12.5" y="5" width="2" height="1.5" fill="#6cb85a"/><rect x="3.5" y="13" width="5" height="2.5" fill="#dcdcdc" stroke="#8d8d8d" stroke-width="0.8"/></svg>
<div class="b" style="left:619.5px;top:872.0px;width:100.0px;height:26.0px;overflow:hidden;"><div class="t" style="left:4.5px;top:5.26px;font-size:18px;line-height:18px;color:#3c3c3c;transform:scaleX(1.099);">Default</div></div>
<div class="b" style="left:719.5px;top:872.0px;width:80.0px;height:26.0px;overflow:hidden;"><div class="t" style="left:4.5px;top:5.26px;font-size:18px;line-height:18px;color:#3c3c3c;">0</div></div>
<div class="b" style="left:799.5px;top:872.0px;width:100.0px;height:26.0px;overflow:hidden;"><div class="t" style="left:3.6px;top:5.26px;font-size:18px;line-height:18px;color:#3c3c3c;transform:scaleX(0.920);">SYS_IF_PEER_CHANGED</div></div>
<div class="b" style="left:899.5px;top:872.0px;width:100.0px;height:26.0px;overflow:hidden;"><div class="t" style="left:20.4px;top:5.26px;font-size:18px;line-height:18px;color:#3c3c3c;transform:scaleX(1.044);">Normal</div></div>
<svg class="b" style="left:902.0px;top:878.0px" width="14" height="14" viewBox="0 0 14 14"><defs><radialGradient id="cg872" cx="0.4" cy="0.3" r="0.8"><stop offset="0" stop-color="#8ad47e"/><stop offset="1" stop-color="#3ea836"/></radialGradient></defs><circle cx="7" cy="7" r="6.4" fill="url(#cg872)" stroke="#2f8a2a" stroke-width="1"/><circle cx="7" cy="7" r="5.2" fill="none" stroke="#b8e8b0" stroke-width="0.7" opacity="0.7"/><path d="M3.8 7.2L6.1 9.4L10.4 5" stroke="#fff" stroke-width="2" fill="none"/></svg>
<div class="b" style="left:999.5px;top:872.0px;width:250.0px;height:26.0px;overflow:hidden;"><div class="t" style="left:4.0px;top:5.26px;font-size:18px;line-height:18px;color:#3c3c3c;transform:scaleX(1.037);">New peer for interface Fa2/0 i</div></div>
<div class="b" style="left:1249.5px;top:872.0px;width:250.0px;height:26.0px;overflow:hidden;"><div class="t" style="left:4.5px;top:5.26px;font-size:18px;line-height:18px;color:#3c3c3c;"></div></div>
<div class="b" style="left:1499.5px;top:872.0px;width:396.0px;height:26.0px;overflow:hidden;"><div class="t" style="left:4.5px;top:5.26px;font-size:18px;line-height:18px;color:#3c3c3c;transform:scaleX(0.960);">0</div></div>
<div class="b" style="left:48.0px;top:898.0px;width:81.5px;height:26.0px;overflow:hidden;"><div class="t" style="left:6.4px;top:5.26px;font-size:18px;line-height:18px;color:#3c3c3c;transform:scaleX(0.960);">19581</div></div>
<div class="b" style="left:129.5px;top:898.0px;width:120.0px;height:26.0px;overflow:hidden;"><div class="t" style="left:4.5px;top:5.26px;font-size:18px;line-height:18px;color:#3c3c3c;transform:scaleX(0.973);">06.01.2023 19</div></div>
<div class="b" style="left:249.5px;top:898.0px;width:120.0px;height:26.0px;overflow:hidden;"><div class="t" style="left:4.5px;top:5.26px;font-size:18px;line-height:18px;color:#3c3c3c;transform:scaleX(0.973);">06.01.2023 19</div></div>
<div class="b" style="left:369.5px;top:898.0px;width:100.0px;height:26.0px;overflow:hidden;"><div class="t" style="left:4.0px;top:5.26px;font-size:18px;line-height:18px;color:#3c3c3c;transform:scaleX(0.979);">System</div></div>
<div class="b" style="left:469.5px;top:898.0px;width:150.0px;height:26.0px;overflow:hidden;"><div class="t" style="left:20.5px;top:5.26px;font-size:18px;line-height:18px;color:#3c3c3c;transform:scaleX(0.960);">10.5.90.35</div></div>
<svg class="b" style="left:471.0px;top:903.5px" width="16" height="16" viewBox="0 0 16 16"><rect x="6.5" y="0.5" width="9" height="13" fill="#e9e9e9" stroke="#8d8d8d"/><rect x="0.5" y="3.5" width="11" height="9" fill="#f3f3f3" stroke="#8d8d8d"/><rect x="2" y="5" width="8" height="6" fill="#6f8fd0"/><rect x="12.5" y="5" width="2" height="1.5" fill="#6cb85a"/><rect x="3.5" y="13" width="5" height="2.5" fill="#dcdcdc" stroke="#8d8d8d" stroke-width="0.8"/></svg>
<div class="b" style="left:619.5px;top:898.0px;width:100.0px;height:26.0px;overflow:hidden;"><div class="t" style="left:4.5px;top:5.26px;font-size:18px;line-height:18px;color:#3c3c3c;transform:scaleX(1.099);">Default</div></div>
<div class="b" style="left:719.5px;top:898.0px;width:80.0px;height:26.0px;overflow:hidden;"><div class="t" style="left:4.5px;top:5.26px;font-size:18px;line-height:18px;color:#3c3c3c;">0</div></div>
<div class="b" style="left:799.5px;top:898.0px;width:100.0px;height:26.0px;overflow:hidden;"><div class="t" style="left:3.6px;top:5.26px;font-size:18px;line-height:18px;color:#3c3c3c;transform:scaleX(0.920);">SYS_IF_PEER_CHANGED</div></div>
<div class="b" style="left:899.5px;top:898.0px;width:100.0px;height:26.0px;overflow:hidden;"><div class="t" style="left:20.4px;top:5.26px;font-size:18px;line-height:18px;color:#3c3c3c;transform:scaleX(1.044);">Normal</div></div>
<svg class="b" style="left:902.0px;top:904.0px" width="14" height="14" viewBox="0 0 14 14"><defs><radialGradient id="cg898" cx="0.4" cy="0.3" r="0.8"><stop offset="0" stop-color="#8ad47e"/><stop offset="1" stop-color="#3ea836"/></radialGradient></defs><circle cx="7" cy="7" r="6.4" fill="url(#cg898)" stroke="#2f8a2a" stroke-width="1"/><circle cx="7" cy="7" r="5.2" fill="none" stroke="#b8e8b0" stroke-width="0.7" opacity="0.7"/><path d="M3.8 7.2L6.1 9.4L10.4 5" stroke="#fff" stroke-width="2" fill="none"/></svg>
<div class="b" style="left:999.5px;top:898.0px;width:250.0px;height:26.0px;overflow:hidden;"><div class="t" style="left:4.0px;top:5.26px;font-size:18px;line-height:18px;color:#3c3c3c;transform:scaleX(1.037);">New peer for interface Fa0/1 i</div></div>
<div class="b" style="left:1249.5px;top:898.0px;width:250.0px;height:26.0px;overflow:hidden;"><div class="t" style="left:4.5px;top:5.26px;font-size:18px;line-height:18px;color:#3c3c3c;"></div></div>
<div class="b" style="left:1499.5px;top:898.0px;width:396.0px;height:26.0px;overflow:hidden;"><div class="t" style="left:4.5px;top:5.26px;font-size:18px;line-height:18px;color:#3c3c3c;transform:scaleX(0.960);">0</div></div>
<div class="b" style="left:48.0px;top:924.0px;width:81.5px;height:26.0px;overflow:hidden;"><div class="t" style="left:6.4px;top:5.26px;font-size:18px;line-height:18px;color:#3c3c3c;transform:scaleX(0.960);">19579</div></div>
<div class="b" style="left:129.5px;top:924.0px;width:120.0px;height:26.0px;overflow:hidden;"><div class="t" style="left:4.5px;top:5.26px;font-size:18px;line-height:18px;color:#3c3c3c;transform:scaleX(0.973);">06.01.2023 19</div></div>
<div class="b" style="left:249.5px;top:924.0px;width:120.0px;height:26.0px;overflow:hidden;"><div class="t" style="left:4.5px;top:5.26px;font-size:18px;line-height:18px;color:#3c3c3c;transform:scaleX(0.973);">06.01.2023 19</div></div>
<div class="b" style="left:369.5px;top:924.0px;width:100.0px;height:26.0px;overflow:hidden;"><div class="t" style="left:4.0px;top:5.26px;font-size:18px;line-height:18px;color:#3c3c3c;transform:scaleX(0.979);">System</div></div>
<div class="b" style="left:469.5px;top:924.0px;width:150.0px;height:26.0px;overflow:hidden;"><div class="t" style="left:20.5px;top:5.26px;font-size:18px;line-height:18px;color:#3c3c3c;transform:scaleX(0.960);">10.5.90.35</div></div>
<svg class="b" style="left:471.0px;top:929.5px" width="16" height="16" viewBox="0 0 16 16"><rect x="6.5" y="0.5" width="9" height="13" fill="#e9e9e9" stroke="#8d8d8d"/><rect x="0.5" y="3.5" width="11" height="9" fill="#f3f3f3" stroke="#8d8d8d"/><rect x="2" y="5" width="8" height="6" fill="#6f8fd0"/><rect x="12.5" y="5" width="2" height="1.5" fill="#6cb85a"/><rect x="3.5" y="13" width="5" height="2.5" fill="#dcdcdc" stroke="#8d8d8d" stroke-width="0.8"/></svg>
<div class="b" style="left:619.5px;top:924.0px;width:100.0px;height:26.0px;overflow:hidden;"><div class="t" style="left:4.5px;top:5.26px;font-size:18px;line-height:18px;color:#3c3c3c;transform:scaleX(1.099);">Default</div></div>
<div class="b" style="left:719.5px;top:924.0px;width:80.0px;height:26.0px;overflow:hidden;"><div class="t" style="left:4.5px;top:5.26px;font-size:18px;line-height:18px;color:#3c3c3c;">0</div></div>
<div class="b" style="left:799.5px;top:924.0px;width:100.0px;height:26.0px;overflow:hidden;"><div class="t" style="left:3.6px;top:5.26px;font-size:18px;line-height:18px;color:#3c3c3c;transform:scaleX(0.920);">SYS_IF_PEER_CHANGED</div></div>
<div class="b" style="left:899.5px;top:924.0px;width:100.0px;height:26.0px;overflow:hidden;"><div class="t" style="left:20.4px;top:5.26px;font-size:18px;line-height:18px;color:#3c3c3c;transform:scaleX(1.044);">Normal</div></div>
<svg class="b" style="left:902.0px;top:930.0px" width="14" height="14" viewBox="0 0 14 14"><defs><radialGradient id="cg924" cx="0.4" cy="0.3" r="0.8"><stop offset="0" stop-color="#8ad47e"/><stop offset="1" stop-color="#3ea836"/></radialGradient></defs><circle cx="7" cy="7" r="6.4" fill="url(#cg924)" stroke="#2f8a2a" stroke-width="1"/><circle cx="7" cy="7" r="5.2" fill="none" stroke="#b8e8b0" stroke-width="0.7" opacity="0.7"/><path d="M3.8 7.2L6.1 9.4L10.4 5" stroke="#fff" stroke-width="2" fill="none"/></svg>
<div class="b" style="left:999.5px;top:924.0px;width:250.0px;height:26.0px;overflow:hidden;"><div class="t" style="left:4.0px;top:5.26px;font-size:18px;line-height:18px;color:#3c3c3c;transform:scaleX(1.037);">New peer for interface Fa0/0 i</div></div>
<div class="b" style="left:1249.5px;top:924.0px;width:250.0px;height:26.0px;overflow:hidden;"><div class="t" style="left:4.5px;top:5.26px;font-size:18px;line-height:18px;color:#3c3c3c;"></div></div>
<div class="b" style="left:1499.5px;top:924.0px;width:396.0px;height:26.0px;overflow:hidden;"><div class="t" style="left:4.5px;top:5.26px;font-size:18px;line-height:18px;color:#3c3c3c;transform:scaleX(0.960);">0</div></div>
<div class="b" style="left:48.0px;top:950.0px;width:81.5px;height:26.0px;overflow:hidden;"><div class="t" style="left:6.4px;top:5.26px;font-size:18px;line-height:18px;color:#3c3c3c;transform:scaleX(0.960);">19584</div></div>
<div class="b" style="left:129.5px;top:950.0px;width:120.0px;height:26.0px;overflow:hidden;"><div class="t" style="left:4.5px;top:5.26px;font-size:18px;line-height:18px;color:#3c3c3c;transform:scaleX(0.973);">06.01.2023 19</div></div>
<div class="b" style="left:249.5px;top:950.0px;width:120.0px;height:26.0px;overflow:hidden;"><div class="t" style="left:4.5px;top:5.26px;font-size:18px;line-height:18px;color:#3c3c3c;transform:scaleX(0.973);">06.01.2023 19</div></div>
<div class="b" style="left:369.5px;top:950.0px;width:100.0px;height:26.0px;overflow:hidden;"><div class="t" style="left:4.0px;top:5.26px;font-size:18px;line-height:18px;color:#3c3c3c;transform:scaleX(0.979);">System</div></div>
<div class="b" style="left:469.5px;top:950.0px;width:150.0px;height:26.0px;overflow:hidden;"><div class="t" style="left:20.5px;top:5.26px;font-size:18px;line-height:18px;color:#3c3c3c;transform:scaleX(0.960);">10.5.90.31</div></div>
<svg class="b" style="left:471.0px;top:955.5px" width="16" height="16" viewBox="0 0 16 16"><rect x="6.5" y="0.5" width="9" height="13" fill="#e9e9e9" stroke="#8d8d8d"/><rect x="0.5" y="3.5" width="11" height="9" fill="#f3f3f3" stroke="#8d8d8d"/><rect x="2" y="5" width="8" height="6" fill="#6f8fd0"/><rect x="12.5" y="5" width="2" height="1.5" fill="#6cb85a"/><rect x="3.5" y="13" width="5" height="2.5" fill="#dcdcdc" stroke="#8d8d8d" stroke-width="0.8"/></svg>
<div class="b" style="left:619.5px;top:950.0px;width:100.0px;height:26.0px;overflow:hidden;"><div class="t" style="left:4.5px;top:5.26px;font-size:18px;line-height:18px;color:#3c3c3c;transform:scaleX(1.099);">Default</div></div>
<div class="b" style="left:719.5px;top:950.0px;width:80.0px;height:26.0px;overflow:hidden;"><div class="t" style="left:4.5px;top:5.26px;font-size:18px;line-height:18px;color:#3c3c3c;">0</div></div>
<div class="b" style="left:799.5px;top:950.0px;width:100.0px;height:26.0px;overflow:hidden;"><div class="t" style="left:3.6px;top:5.26px;font-size:18px;line-height:18px;color:#3c3c3c;transform:scaleX(0.920);">SYS_IF_PEER_CHANGED</div></div>
<div class="b" style="left:899.5px;top:950.0px;width:100.0px;height:26.0px;overflow:hidden;"><div class="t" style="left:20.4px;top:5.26px;font-size:18px;line-height:18px;color:#3c3c3c;transform:scaleX(1.044);">Normal</div></div>
<svg class="b" style="left:902.0px;top:956.0px" width="14" height="14" viewBox="0 0 14 14"><defs><radialGradient id="cg950" cx="0.4" cy="0.3" r="0.8"><stop offset="0" stop-color="#8ad47e"/><stop offset="1" stop-color="#3ea836"/></radialGradient></defs><circle cx="7" cy="7" r="6.4" fill="url(#cg950)" stroke="#2f8a2a" stroke-width="1"/><circle cx="7" cy="7" r="5.2" fill="none" stroke="#b8e8b0" stroke-width="0.7" opacity="0.7"/><path d="M3.8 7.2L6.1 9.4L10.4 5" stroke="#fff" stroke-width="2" fill="none"/></svg>
<div class="b" style="left:999.5px;top:950.0px;width:250.0px;height:26.0px;overflow:hidden;"><div class="t" style="left:4.0px;top:5.26px;font-size:18px;line-height:18px;color:#3c3c3c;transform:scaleX(1.037);">New peer for interface Se1/2 i</div></div>
<div class="b" style="left:1249.5px;top:950.0px;width:250.0px;height:26.0px;overflow:hidden;"><div class="t" style="left:4.5px;top:5.26px;font-size:18px;line-height:18px;color:#3c3c3c;"></div></div>
<div class="b" style="left:1499.5px;top:950.0px;width:396.0px;height:26.0px;overflow:hidden;"><div class="t" style="left:4.5px;top:5.26px;font-size:18px;line-height:18px;color:#3c3c3c;transform:scaleX(0.960);">0</div></div>
<div class="b" style="left:48.0px;top:976.0px;width:81.5px;height:26.0px;overflow:hidden;"><div class="t" style="left:6.4px;top:5.26px;font-size:18px;line-height:18px;color:#3c3c3c;transform:scaleX(0.960);">19578</div></div>
<div class="b" style="left:129.5px;top:976.0px;width:120.0px;height:26.0px;overflow:hidden;"><div class="t" style="left:4.5px;top:5.26px;font-size:18px;line-height:18px;color:#3c3c3c;transform:scaleX(0.973);">06.01.2023 19</div></div>
<div class="b" style="left:249.5px;top:976.0px;width:120.0px;height:26.0px;overflow:hidden;"><div class="t" style="left:4.5px;top:5.26px;font-size:18px;line-height:18px;color:#3c3c3c;transform:scaleX(0.973);">06.01.2023 19</div></div>
<div class="b" style="left:369.5px;top:976.0px;width:100.0px;height:26.0px;overflow:hidden;"><div class="t" style="left:4.0px;top:5.26px;font-size:18px;line-height:18px;color:#3c3c3c;transform:scaleX(0.979);">System</div></div>
<div class="b" style="left:469.5px;top:976.0px;width:150.0px;height:26.0px;overflow:hidden;"><div class="t" style="left:20.5px;top:5.26px;font-size:18px;line-height:18px;color:#3c3c3c;transform:scaleX(0.960);">R9</div></div>
<svg class="b" style="left:471.0px;top:981.5px" width="16" height="16" viewBox="0 0 16 16"><rect x="6.5" y="0.5" width="9" height="13" fill="#e9e9e9" stroke="#8d8d8d"/><rect x="0.5" y="3.5" width="11" height="9" fill="#f3f3f3" stroke="#8d8d8d"/><rect x="2" y="5" width="8" height="6" fill="#6f8fd0"/><rect x="12.5" y="5" width="2" height="1.5" fill="#6cb85a"/><rect x="3.5" y="13" width="5" height="2.5" fill="#dcdcdc" stroke="#8d8d8d" stroke-width="0.8"/></svg>
<div class="b" style="left:619.5px;top:976.0px;width:100.0px;height:26.0px;overflow:hidden;"><div class="t" style="left:4.5px;top:5.26px;font-size:18px;line-height:18px;color:#3c3c3c;transform:scaleX(1.099);">Default</div></div>
<div class="b" style="left:719.5px;top:976.0px;width:80.0px;height:26.0px;overflow:hidden;"><div class="t" style="left:4.5px;top:5.26px;font-size:18px;line-height:18px;color:#3c3c3c;">0</div></div>
<div class="b" style="left:799.5px;top:976.0px;width:100.0px;height:26.0px;overflow:hidden;"><div class="t" style="left:3.6px;top:5.26px;font-size:18px;line-height:18px;color:#3c3c3c;transform:scaleX(0.920);">SYS_IF_PEER_CHANGED</div></div>
<div class="b" style="left:899.5px;top:976.0px;width:100.0px;height:26.0px;overflow:hidden;"><div class="t" style="left:20.4px;top:5.26px;font-size:18px;line-height:18px;color:#3c3c3c;transform:scaleX(1.044);">Normal</div></div>
<svg class="b" style="left:902.0px;top:982.0px" width="14" height="14" viewBox="0 0 14 14"><defs><radialGradient id="cg976" cx="0.4" cy="0.3" r="0.8"><stop offset="0" stop-color="#8ad47e"/><stop offset="1" stop-color="#3ea836"/></radialGradient></defs><circle cx="7" cy="7" r="6.4" fill="url(#cg976)" stroke="#2f8a2a" stroke-width="1"/><circle cx="7" cy="7" r="5.2" fill="none" stroke="#b8e8b0" stroke-width="0.7" opacity="0.7"/><path d="M3.8 7.2L6.1 9.4L10.4 5" stroke="#fff" stroke-width="2" fill="none"/></svg>
<div class="b" style="left:999.5px;top:976.0px;width:250.0px;height:26.0px;overflow:hidden;"><div class="t" style="left:4.0px;top:5.26px;font-size:18px;line-height:18px;color:#3c3c3c;transform:scaleX(1.037);">New peer for interface Se1/0 i</div></div>
<div class="b" style="left:1249.5px;top:976.0px;width:250.0px;height:26.0px;overflow:hidden;"><div class="t" style="left:4.5px;top:5.26px;font-size:18px;line-height:18px;color:#3c3c3c;"></div></div>
<div class="b" style="left:1499.5px;top:976.0px;width:396.0px;height:26.0px;overflow:hidden;"><div class="t" style="left:4.5px;top:5.26px;font-size:18px;line-height:18px;color:#3c3c3c;transform:scaleX(0.960);">0</div></div>
<div class="b" style="left:48.0px;top:1002.0px;width:81.5px;height:26.0px;overflow:hidden;"><div class="t" style="left:6.4px;top:5.26px;font-size:18px;line-height:18px;color:#3c3c3c;transform:scaleX(0.960);">19575</div></div>
<div class="b" style="left:129.5px;top:1002.0px;width:120.0px;height:26.0px;overflow:hidden;"><div class="t" style="left:4.5px;top:5.26px;font-size:18px;line-height:18px;color:#3c3c3c;transform:scaleX(0.973);">06.01.2023 19</div></div>
<div class="b" style="left:249.5px;top:1002.0px;width:120.0px;height:26.0px;overflow:hidden;"><div class="t" style="left:4.5px;top:5.26px;font-size:18px;line-height:18px;color:#3c3c3c;transform:scaleX(0.973);">06.01.2023 19</div></div>
<div class="b" style="left:369.5px;top:1002.0px;width:100.0px;height:26.0px;overflow:hidden;"><div class="t" style="left:4.0px;top:5.26px;font-size:18px;line-height:18px;color:#3c3c3c;transform:scaleX(0.979);">System</div></div>
<div class="b" style="left:469.5px;top:1002.0px;width:150.0px;height:26.0px;overflow:hidden;"><div class="t" style="left:20.5px;top:5.26px;font-size:18px;line-height:18px;color:#3c3c3c;transform:scaleX(0.960);">10.5.90.31</div></div>
<svg class="b" style="left:471.0px;top:1007.5px" width="16" height="16" viewBox="0 0 16 16"><rect x="6.5" y="0.5" width="9" height="13" fill="#e9e9e9" stroke="#8d8d8d"/><rect x="0.5" y="3.5" width="11" height="9" fill="#f3f3f3" stroke="#8d8d8d"/><rect x="2" y="5" width="8" height="6" fill="#6f8fd0"/><rect x="12.5" y="5" width="2" height="1.5" fill="#6cb85a"/><rect x="3.5" y="13" width="5" height="2.5" fill="#dcdcdc" stroke="#8d8d8d" stroke-width="0.8"/></svg>
<div class="b" style="left:619.5px;top:1002.0px;width:100.0px;height:26.0px;overflow:hidden;"><div class="t" style="left:4.5px;top:5.26px;font-size:18px;line-height:18px;color:#3c3c3c;transform:scaleX(1.099);">Default</div></div>
<div class="b" style="left:719.5px;top:1002.0px;width:80.0px;height:26.0px;overflow:hidden;"><div class="t" style="left:4.5px;top:5.26px;font-size:18px;line-height:18px;color:#3c3c3c;">0</div></div>
<div class="b" style="left:799.5px;top:1002.0px;width:100.0px;height:26.0px;overflow:hidden;"><div class="t" style="left:3.6px;top:5.26px;font-size:18px;line-height:18px;color:#3c3c3c;transform:scaleX(0.920);">SYS_IF_PEER_CHANGED</div></div>
<div class="b" style="left:899.5px;top:1002.0px;width:100.0px;height:26.0px;overflow:hidden;"><div class="t" style="left:20.4px;top:5.26px;font-size:18px;line-height:18px;color:#3c3c3c;transform:scaleX(1.044);">Normal</div></div>
<svg class="b" style="left:902.0px;top:1008.0px" width="14" height="14" viewBox="0 0 14 14"><defs><radialGradient id="cg1002" cx="0.4" cy="0.3" r="0.8"><stop offset="0" stop-color="#8ad47e"/><stop offset="1" stop-color="#3ea836"/></radialGradient></defs><circle cx="7" cy="7" r="6.4" fill="url(#cg1002)" stroke="#2f8a2a" stroke-width="1"/><circle cx="7" cy="7" r="5.2" fill="none" stroke="#b8e8b0" stroke-width="0.7" opacity="0.7"/><path d="M3.8 7.2L6.1 9.4L10.4 5" stroke="#fff" stroke-width="2" fill="none"/></svg>
<div class="b" style="left:999.5px;top:1002.0px;width:250.0px;height:26.0px;overflow:hidden;"><div class="t" style="left:4.0px;top:5.26px;font-size:18px;line-height:18px;color:#3c3c3c;transform:scaleX(1.037);">New peer for interface Se1/1 i</div></div>
<div class="b" style="left:1249.5px;top:1002.0px;width:250.0px;height:26.0px;overflow:hidden;"><div class="t" style="left:4.5px;top:5.26px;font-size:18px;line-height:18px;color:#3c3c3c;"></div></div>
<div class="b" style="left:1499.5px;top:1002.0px;width:396.0px;height:26.0px;overflow:hidden;"><div class="t" style="left:4.5px;top:5.26px;font-size:18px;line-height:18px;color:#3c3c3c;transform:scaleX(0.960);">0</div></div>
<div class="b" style="left:129px;top:468px;width:1px;height:554px;border-left:1px dotted #4a4a4a;"></div>
<div class="b" style="left:249px;top:468px;width:1px;height:554px;border-left:1px dotted #4a4a4a;"></div>
<div class="b" style="left:369px;top:468px;width:1px;height:554px;border-left:1px dotted #4a4a4a;"></div>
<div class="b" style="left:469px;top:468px;width:1px;height:554px;border-left:1px dotted #4a4a4a;"></div>
<div class="b" style="left:619px;top:468px;width:1px;height:554px;border-left:1px dotted #4a4a4a;"></div>
<div class="b" style="left:719px;top:468px;width:1px;height:554px;border-left:1px dotted #4a4a4a;"></div>
<div class="b" style="left:799px;top:468px;width:1px;height:554px;border-left:1px dotted #4a4a4a;"></div>
<div class="b" style="left:899px;top:468px;width:1px;height:554px;border-left:1px dotted #4a4a4a;"></div>
<div class="b" style="left:999px;top:468px;width:1px;height:554px;border-left:1px dotted #4a4a4a;"></div>
<div class="b" style="left:1249px;top:468px;width:1px;height:554px;border-left:1px dotted #4a4a4a;"></div>
<div class="b" style="left:1499px;top:468px;width:1px;height:554px;border-left:1px dotted #4a4a4a;"></div>
<svg class="b" style="left:12.7px;top:39px" width="40" height="36" viewBox="0 0 40 36"><defs><linearGradient id="lg1" x1="0" y1="0" x2="0" y2="1"><stop offset="0" stop-color="#ff5a14"/><stop offset="1" stop-color="#ff2000"/></linearGradient><linearGradient id="lg2" x1="0" y1="0" x2="1" y2="1"><stop offset="0" stop-color="#ff5a08"/><stop offset="0.5" stop-color="#ff8000"/><stop offset="1" stop-color="#ff9a1a"/></linearGradient><linearGradient id="lg3" x1="0" y1="0" x2="0" y2="1"><stop offset="0" stop-color="#ff2010"/><stop offset="1" stop-color="#ff5010"/></linearGradient></defs><rect x="0" y="0.1" width="14.9" height="35.4" rx="7.45" fill="#0b1c26"/><path d="M7.5 7.6L32.8 28" stroke="#0b1c26" stroke-width="15.2" stroke-linecap="round"/><path d="M24.8 5L34.3 13.5" stroke="#0b1c26" stroke-width="9.2" stroke-linecap="round"/><rect x="32.7" y="0" width="7.4" height="18.6" rx="3.6" fill="#0b1c26"/><rect x="0.5" y="0.6" width="13.9" height="34.4" rx="6.95" fill="url(#lg1)"/><path d="M7.5 7.6L32.8 28" stroke="url(#lg2)" stroke-width="14" stroke-linecap="round"/><rect x="33.3" y="0.6" width="6.2" height="17.4" rx="3" fill="url(#lg3)"/><path d="M24.8 5L34.3 13.5" stroke="#ff8a10" stroke-width="8" stroke-linecap="round"/><path d="M33.3 8V14.5" stroke="#ff4a10" stroke-width="0" /></svg>
<svg class="b" style="left:1536px;top:44px;" width="24" height="27" viewBox="0 0 24 27"><circle cx="12" cy="7" r="5.6" fill="none" stroke="#cfd3d6" stroke-width="2"/><path d="M1.5 25.5V21.5C1.5 18 4.5 15.5 8 15.5H16C19.5 15.5 22.5 18 22.5 21.5V25.5Z" fill="none" stroke="#cfd3d6" stroke-width="2" stroke-linejoin="round"/></svg>
<svg class="b" style="left:1788.5px;top:44.5px;" width="27" height="25" viewBox="0 0 27 25"><g fill="none" stroke="#cfd3d6" stroke-width="2"><path d="M4.5 0V6M4.5 12V25M13.5 0V14M13.5 20V25M22.5 0V4M22.5 10V25"/><circle cx="4.5" cy="9" r="3"/><circle cx="13.5" cy="17" r="3"/><circle cx="22.5" cy="7" r="3"/></g></svg>
<svg class="b" style="left:1828px;top:43px;" width="29" height="29" viewBox="0 0 29 29"><circle cx="14.5" cy="14.5" r="13.3" fill="none" stroke="#cfd3d6" stroke-width="2"/><path d="M10.3 11C10.3 8.5 12.2 6.8 14.6 6.8C17 6.8 18.8 8.5 18.8 10.6C18.8 13.5 14.8 13.8 14.8 17.3" fill="none" stroke="#cfd3d6" stroke-width="2"/><circle cx="14.8" cy="21.3" r="1.3" fill="#cfd3d6"/></svg>
<svg class="b" style="left:1870px;top:43px;" width="29" height="29" viewBox="0 0 29 29"><circle cx="14.5" cy="14.5" r="13.3" fill="none" stroke="#cfd3d6" stroke-width="2"/><circle cx="14.5" cy="8" r="1.5" fill="#cfd3d6"/><path d="M11.5 12H15V21.5M11 21.5H18.5" fill="none" stroke="#cfd3d6" stroke-width="2"/></svg>
<svg class="b" style="left:8px;top:90px;" width="26" height="30" viewBox="0 0 26 30"><path d="M13 4C8.3 4 6.2 7.8 6.2 12.5V16.5C6.2 20 3.5 22.5 1.5 25H24.5C22.5 22.5 19.8 20 19.8 16.5V12.5C19.8 7.8 17.7 4 13 4Z" stroke="#111" stroke-width="2.1" fill="none" stroke-linejoin="round" stroke-linecap="round"/><path d="M13 1.2V3.8" stroke="#111" stroke-width="2.1" fill="none" stroke-linejoin="round" stroke-linecap="round"/><path d="M10.8 26.8C11.3 28.5 14.7 28.5 15.2 26.8" stroke="#111" stroke-width="2.1" fill="none" stroke-linejoin="round" stroke-linecap="round"/></svg>
<svg class="b" style="left:6px;top:133px;" width="30" height="28" viewBox="0 0 30 28"><path d="M6.8 20.6A6.3 6.3 0 0 1 7.6 8.1A9.4 9.4 0 0 1 25.6 11.9A4.4 4.4 0 0 1 25 20.6Z" stroke="#111" stroke-width="2.1" fill="none" stroke-linejoin="round" stroke-linecap="round"/><path d="M3.8 26.4H25.9M15 23.5V26" stroke="#111" stroke-width="2.1" fill="none" stroke-linejoin="round" stroke-linecap="round"/></svg>
<svg class="b" style="left:10px;top:175px;" width="23" height="29" viewBox="0 0 23 29"><rect x="1.2" y="8.5" width="13" height="19" stroke="#111" stroke-width="2.1" fill="none" stroke-linejoin="round" stroke-linecap="round"/><path d="M4.5 12.5H10.5" stroke="#111" stroke-width="2.1" fill="none" stroke-linejoin="round" stroke-linecap="round"/><circle cx="7.8" cy="23.8" r="0.9" fill="#111"/><path d="M5 5V4.8H17.5V23" stroke="#111" stroke-width="2.1" fill="none" stroke-linejoin="round" stroke-linecap="round"/><path d="M9 1.2H21.5V19.5" stroke="#111" stroke-width="2.1" fill="none" stroke-linejoin="round" stroke-linecap="round"/></svg>
<svg class="b" style="left:7px;top:218px;" width="28" height="26" viewBox="0 0 28 26"><path d="M1.2 4.5L9 1.2L17.8 4.5L26.8 1.8V21.5L17.8 24.8L9 21.5L1.2 24.5Z" stroke="#111" stroke-width="2.1" fill="none" stroke-linejoin="round" stroke-linecap="round"/><path d="M9 3V6M9 9V12M9 15V18M9 20.5V21.5M17.8 6.5V9.5M17.8 12.5V15.5M17.8 18.5V22" stroke="#111" stroke-width="2"/></svg>
<svg class="b" style="left:6.5px;top:260.5px;" width="29" height="25" viewBox="0 0 29 25"><path d="M4.2 23.5C2.3 21.3 1.2 18.3 1.2 15C1.2 7.4 7.3 1.2 14.5 1.2C21.7 1.2 27.8 7.4 27.8 15C27.8 18.3 26.7 21.3 24.8 23.5Z" stroke="#111" stroke-width="2.1" fill="none" stroke-linejoin="round" stroke-linecap="round"/><path d="M14.5 2V5M2.5 15H5.5M23.5 15H26.5M5.5 6L7.5 8M21.5 8L23.5 6" stroke="#111" stroke-width="2.1" fill="none" stroke-linejoin="round" stroke-linecap="round"/><path d="M13.5 16L20 9.5" stroke="#111" stroke-width="2.2"/><circle cx="13.2" cy="16.2" r="2.4" fill="#111"/></svg>
<svg class="b" style="left:8px;top:301px;" width="27" height="27" viewBox="0 0 27 27"><rect x="1.2" y="1.2" width="7.5" height="24.5" stroke="#111" stroke-width="2.1" fill="none" stroke-linejoin="round" stroke-linecap="round"/><rect x="8.7" y="4.5" width="6.5" height="21.2" stroke="#111" stroke-width="2.1" fill="none" stroke-linejoin="round" stroke-linecap="round"/><path d="M15.8 8.5L21.5 6.5L26 24L20.3 26Z" stroke="#111" stroke-width="2.1" fill="none" stroke-linejoin="round" stroke-linecap="round"/></svg>
<svg class="b" style="left:7px;top:342px;" width="28" height="26" viewBox="0 0 28 26"><path d="M9.5 4.5V1.5H18.5V4.5" stroke="#111" stroke-width="2.1" fill="none" stroke-linejoin="round" stroke-linecap="round"/><path d="M1.2 4.5H26.8V13C26.8 14.5 25.8 15 24.5 15H20M8 15H3.5C2.2 15 1.2 14.5 1.2 13Z" stroke="#111" stroke-width="2.1" fill="none" stroke-linejoin="round" stroke-linecap="round"/><path d="M1.2 17.5V24.5H26.8V17.5" stroke="#111" stroke-width="2.1" fill="none" stroke-linejoin="round" stroke-linecap="round"/><path d="M8 12.5V17M20 12.5V17M8 15H20" stroke="#111" stroke-width="2.1" fill="none" stroke-linejoin="round" stroke-linecap="round"/></svg>
<svg class="b" style="left:7px;top:385px;" width="28" height="28" viewBox="0 0 28 28"><circle cx="14" cy="14" r="12.8" stroke="#111" stroke-width="2.1" fill="none" stroke-linejoin="round" stroke-linecap="round"/><ellipse cx="14" cy="14" rx="6.2" ry="12.8" stroke="#111" stroke-width="2.1" fill="none" stroke-linejoin="round" stroke-linecap="round"/><path d="M14 1.2V26.8M4.5 10.3H23.5M4.5 17.7H23.5" stroke="#111" stroke-width="2.1" fill="none" stroke-linejoin="round" stroke-linecap="round"/></svg>
<svg class="b" style="left:5px;top:426px;" width="32" height="31" viewBox="0 0 32 31"><rect x="1.2" y="1.2" width="29.6" height="21.5" stroke="#111" stroke-width="2.3" fill="none"/><path d="M5 19V5H27" stroke="#111" stroke-width="2" fill="none"/><path d="M12 23V27M20 23V27M8 28.8H24" stroke="#111" stroke-width="2.1" fill="none" stroke-linejoin="round" stroke-linecap="round"/></svg>
<div class="b" style="left:4px;top:463px;width:36.6px;height:39px;border-radius:5px;background:linear-gradient(#dcdbd9,#cfcecc);"></div>
<svg class="b" style="left:5.5px;top:467px;" width="32" height="32" viewBox="0 0 32 32"><path d="M7.5 24V5.8C7.5 3.2 9 1.5 11.8 1.5H27.5C29.5 1.5 30.8 2.8 30.8 4.6C30.8 6.4 29.5 7.8 27.5 7.8H26.5" stroke="#111" stroke-width="2.1" fill="none" stroke-linejoin="round" stroke-linecap="round"/><path d="M11.8 1.5C14.2 1.5 15.5 3 15.5 5.2V7.8H26.5V26.5C26.5 29 25 30.5 22.5 30.5H4.5C2.6 30.5 1.2 29.1 1.2 27.2C1.2 25.3 2.6 24 4.5 24H7.5V27.5" stroke="#111" stroke-width="2.1" fill="none" stroke-linejoin="round" stroke-linecap="round"/></svg>
<svg class="b" style="left:5px;top:510.5px;" width="32" height="27" viewBox="0 0 32 27"><path d="M11.5 5V1.2H20.5V5" stroke="#111" stroke-width="2.1" fill="none" stroke-linejoin="round" stroke-linecap="round"/><path d="M1.2 9.5C1.2 7 3 5 5.5 5H26.5C29 5 30.8 7 30.8 9.5V25.5H1.2Z" stroke="#111" stroke-width="2.1" fill="none" stroke-linejoin="round" stroke-linecap="round"/><path d="M1.2 14.5H12.5M19.5 14.5H30.8" stroke="#111" stroke-width="2.1" fill="none" stroke-linejoin="round" stroke-linecap="round"/><rect x="13" y="11" width="6" height="7" stroke="#111" stroke-width="2.1" fill="none" stroke-linejoin="round" stroke-linecap="round"/></svg>
<svg class="b" style="left:6.9px;top:552.75px" width="28" height="28" viewBox="-14 -14 28 28"><path d="M-3.20 -9.05 L-1.95 -10.01 L-1.85 -13.17 L1.85 -13.17 L1.95 -10.01 L3.20 -9.05 L4.13 -8.66 L5.70 -8.46 L8.00 -10.62 L10.62 -8.00 L8.46 -5.70 L8.66 -4.13 L9.05 -3.20 L10.01 -1.95 L13.17 -1.85 L13.17 1.85 L10.01 1.95 L9.05 3.20 L8.66 4.13 L8.46 5.70 L10.62 8.00 L8.00 10.62 L5.70 8.46 L4.13 8.66 L3.20 9.05 L1.95 10.01 L1.85 13.17 L-1.85 13.17 L-1.95 10.01 L-3.20 9.05 L-4.13 8.66 L-5.70 8.46 L-8.00 10.62 L-10.62 8.00 L-8.46 5.70 L-8.66 4.13 L-9.05 3.20 L-10.01 1.95 L-13.17 1.85 L-13.17 -1.85 L-10.01 -1.95 L-9.05 -3.20 L-8.66 -4.13 L-8.46 -5.70 L-10.62 -8.00 L-8.00 -10.62 L-5.70 -8.46 L-4.13 -8.66Z" stroke="#111" stroke-width="2.1" fill="none" stroke-linejoin="round" stroke-linecap="round"/><circle cx="0" cy="0" r="5.2" stroke="#111" stroke-width="2.1" fill="none" stroke-linejoin="round" stroke-linecap="round"/></svg>
<svg class="b" style="left:8px;top:594px;" width="28" height="28" viewBox="0 0 28 28"><path d="M16 3.5H2.2V26.5H24.5V13.5" stroke="#111" stroke-width="2.1" fill="none" stroke-linejoin="round" stroke-linecap="round"/><path d="M20.5 1.5L26.5 7.5" stroke="#111" stroke-width="2.1" fill="none" stroke-linejoin="round" stroke-linecap="round"/><path d="M22 4L16.5 7L13 8.5L19.5 15L21 11.5L24 6Z" stroke="#111" stroke-width="2.1" fill="none" stroke-linejoin="round" stroke-linecap="round"/><path d="M11.5 16.5L15.5 12.5" stroke="#111" stroke-width="2.1" fill="none" stroke-linejoin="round" stroke-linecap="round"/></svg>
<svg class="b" style="left:50.5px;top:88px;" width="16" height="16" viewBox="0 0 16 16"><rect x="0.6" y="1.5" width="8" height="13" rx="1" fill="#f0dc5a" stroke="#b8a020" stroke-width="1"/><ellipse cx="4.6" cy="2.2" rx="4" ry="1.5" fill="#fbf0a0" stroke="#b8a020" stroke-width="0.8"/><circle cx="12.5" cy="2.8" r="1.8" fill="#7d9fd6" stroke="#3a5a9a" stroke-width="0.7"/><path d="M10.5 5.5H14.5V10.5H13.5V15H11.5V10.5H10.5Z" fill="#8fb0e0" stroke="#3a5a9a" stroke-width="0.7"/></svg>
<svg class="b" style="left:127px;top:89.5px;" width="13" height="13" viewBox="0 0 13 13"><path d="M6.5 0.6L12.4 6.5L6.5 12.4L0.6 6.5Z" fill="#ffd24a" stroke="#d98a10" stroke-width="1"/><rect x="5.8" y="3" width="1.5" height="4.5" fill="#222"/><rect x="5.8" y="8.6" width="1.5" height="1.5" fill="#222"/></svg>
<svg class="b" style="left:207.5px;top:88px;" width="16" height="16" viewBox="0 0 16 16"><rect x="3.5" y="0.5" width="12" height="14" fill="#f6f8fc" stroke="#5a7ab8" stroke-width="1"/><path d="M6 3H13M8 5.5H13M8 8H13M8 10.5H13" stroke="#6aa060" stroke-width="1"/><circle cx="4.5" cy="10" r="3.8" fill="#555"/><rect x="3.5" y="10" width="2" height="6" fill="#444"/></svg>
<svg class="b" style="left:414.5px;top:87.5px;" width="16" height="17" viewBox="0 0 16 17"><rect x="3" y="0.5" width="10" height="7" fill="#fff" stroke="#3a6ad8" stroke-width="1"/><path d="M5 2.5H11M5 4.5H11" stroke="#3a6ad8" stroke-width="0.9"/><path d="M0.6 6.5L8 1.8L15.4 6.5V16.4H0.6Z" fill="#6d9aee" stroke="#2a5ac8" stroke-width="1"/><path d="M0.6 6.5L8 11.5L15.4 6.5" fill="#c0d4f8" stroke="#2a5ac8" stroke-width="1"/></svg>
<svg class="b" style="left:551.5px;top:88px;" width="16" height="16" viewBox="0 0 16 16"><rect x="1.5" y="1.5" width="13.5" height="11" fill="#fafcff" stroke="#6a7a90" stroke-width="1"/><rect x="1.5" y="1.5" width="13.5" height="2.5" fill="#7aa0d8"/><path d="M0.5 8V15.5L6.5 11.8Z" fill="#3aa040" stroke="#2a7a30" stroke-width="0.6"/></svg>
<svg class="b" style="left:790.5px;top:90.5px;" width="10" height="9" viewBox="0 0 10 9"><path d="M1 8.5L5 1L9 8.5L5 6.2Z" fill="#e02040"/></svg>
<svg class="b" style="left:915.5px;top:88px;" width="16" height="16" viewBox="0 0 16 16"><rect x="4.5" y="0.5" width="10.5" height="14" fill="#fff" stroke="#8a8a8a" stroke-width="0.9"/><path d="M8 4H13M8 6.5H13M8 9H13M8 11.5H13" stroke="#7a90c0" stroke-width="0.9"/><path d="M0.6 12.5L4.8 3.5L9 12.5Z" fill="#b8d0f0" stroke="#2a5ab0" stroke-width="1"/></svg>
<svg class="b" style="left:997px;top:87.5px;" width="16" height="17" viewBox="0 0 16 17"><path d="M2.5 2C2.5 1 3.5 0.5 4.5 0.5H14.5V12.5H2.5Z" fill="#dce8f8" stroke="#6080b0" stroke-width="1"/><path d="M1 14.5C1 13.5 1.5 12.5 2.5 12.5H5" stroke="#6080b0" stroke-width="1" fill="none"/><path d="M9 8.5L15.5 16.4H2.5Z" fill="#ffd84a" stroke="#c09a20" stroke-width="0.9"/><rect x="8.6" y="11" width="1" height="2.6" fill="#333"/><rect x="8.6" y="14.3" width="1" height="1" fill="#333"/></svg>
<svg class="b" style="left:1713.5px;top:89.5px;" width="13" height="12" viewBox="0 0 13 12"><path d="M0.8 0.8L12.2 6L0.8 11.2Z" fill="#4cb04c" stroke="#2a8a3a" stroke-width="1"/></svg>
<svg class="b" style="left:1731px;top:88px;" width="15" height="14" viewBox="0 0 15 14"><path d="M1.5 1C1 6 3 9 8 9H9V12.5L14 7.5L9 2.5V5.5H7.5C5 5.5 3.5 4 3.5 1Z" fill="#5ab85a" stroke="#2a8a3a" stroke-width="1"/></svg>
<div class="b" style="left:1751px;top:85px;width:1px;height:20px;background:#dcdad6;"></div>
<svg class="b" style="left:1759px;top:88px;" width="14" height="15" viewBox="0 0 14 15"><rect x="3.5" y="0.5" width="10" height="14" fill="#fafafa" stroke="#c8c8c8" stroke-width="0.8"/><rect x="0.5" y="5" width="7" height="7" fill="#1e7a3a"/><path d="M2 6.5L6 10.5M6 6.5L2 10.5" stroke="#fff" stroke-width="1"/></svg>
<div class="b" style="left:1779px;top:85px;width:1px;height:20px;background:#dcdad6;"></div>
<div class="b" style="left:1786px;top:86px;width:15.8px;height:18.5px;border-radius:4px;background:linear-gradient(#e0dfdc,#cac9c6);border:1px solid #b8b6b2;"></div>
<svg class="b" style="left:1787px;top:87px;" width="14" height="15" viewBox="0 0 14 15"><path d="M0.5 0.8H13.5L8.5 7V13.5L5.5 11V7Z" fill="#f8d020" stroke="#222" stroke-width="1"/></svg>
<svg class="b" style="left:1805px;top:86.5px;" width="16" height="17" viewBox="0 0 16 17"><rect x="0.5" y="0.5" width="9" height="12" fill="#fff" stroke="#7a8ab0" stroke-width="0.9"/><path d="M2 3H8M2 5.5H8M2 8H8" stroke="#6a8ad0" stroke-width="0.9"/><path d="M8 9L15 16M15 9L8 16" stroke="#444" stroke-width="2.2"/></svg>
<svg class="b" style="left:1828px;top:88px;" width="15" height="14" viewBox="0 0 15 14"><path d="M2 8C2 4 5 2 8.5 2.5M13 6C13 10 10 12 6.5 11.5" stroke="#e8a830" stroke-width="2.5" fill="none"/><path d="M7 0L10.5 2.8L7 5.5Z M8 8.5L4.5 11.2L8 14Z" fill="#e8a830"/></svg>
<svg class="b" style="left:1846px;top:88px;" width="15" height="15" viewBox="0 0 15 15"><path d="M9 1L14 6M10.5 2.5L7 5L4 5.5L9.5 11L10 8L12.5 4.5M6.5 8.5L1 14" stroke="#222" stroke-width="1.4" fill="none"/></svg>
<svg class="b" style="left:1866px;top:93px;" width="10" height="6" viewBox="0 0 10 6"><path d="M0 0H10L5 5.5Z" fill="#444"/></svg>
<svg class="b" style="left:1882px;top:88px;" width="15" height="15" viewBox="0 0 15 15"><path d="M6 1.5H1.2V13.8H13.5V9" stroke="#222" stroke-width="1.6" fill="none"/><path d="M8 1.2H13.8V7M13.5 1.5L6.5 8.5" stroke="#222" stroke-width="1.6" fill="none"/></svg>
<svg class="b" style="left:1905px;top:88px;" width="7" height="15" viewBox="0 0 7 15"><circle cx="3.5" cy="2.2" r="1.8" fill="none" stroke="#555" stroke-width="1"/><circle cx="3.5" cy="7.5" r="1.8" fill="none" stroke="#555" stroke-width="1"/><circle cx="3.5" cy="12.8" r="1.8" fill="none" stroke="#555" stroke-width="1"/></svg>
<svg class="b" style="left:1478.0px;top:128px;" width="13" height="13" viewBox="0 0 13 13"><rect x="0.5" y="0.5" width="12" height="12" rx="2" fill="#f4f6fa" stroke="#5a7ab0" stroke-width="1"/><path d="M3.5 6L6.5 3L9.5 6M3.5 9.5L6.5 6.5L9.5 9.5" stroke="#2a4a80" stroke-width="1.2" fill="none"/></svg>
<svg class="b" style="left:1887.0px;top:128px;" width="13" height="13" viewBox="0 0 13 13"><rect x="0.5" y="0.5" width="12" height="12" rx="2" fill="#f4f6fa" stroke="#5a7ab0" stroke-width="1"/><path d="M3.5 6L6.5 3L9.5 6M3.5 9.5L6.5 6.5L9.5 9.5" stroke="#2a4a80" stroke-width="1.2" fill="none"/></svg>
<svg class="b" style="left:639.5px;top:172.5px;" width="15" height="15" viewBox="0 0 15 15"><circle cx="7.5" cy="7.5" r="6.6" fill="#6aa62a" stroke="#4a8a1a" stroke-width="1"/><circle cx="7.5" cy="7.5" r="2.5" fill="#fff"/></svg>
<svg class="b" style="left:788.5px;top:172.5px;" width="15" height="15" viewBox="0 0 15 15"><circle cx="7.5" cy="7.5" r="6.6" fill="#fff" stroke="#c2c0bc" stroke-width="1"/></svg>
<svg class="b" style="left:642.5px;top:315.5px;" width="15" height="15" viewBox="0 0 15 15"><circle cx="7.5" cy="7.5" r="6.6" fill="#6aa62a" stroke="#4a8a1a" stroke-width="1"/><circle cx="7.5" cy="7.5" r="2.5" fill="#fff"/></svg>
<svg class="b" style="left:791.5px;top:315.5px;" width="15" height="15" viewBox="0 0 15 15"><circle cx="7.5" cy="7.5" r="6.6" fill="#fff" stroke="#c2c0bc" stroke-width="1"/></svg>
<svg class="b" style="left:1445px;top:173.7px;" width="13" height="13" viewBox="0 0 13 13"><path d="M4.3 0.6H8.7V4.3H12.4V8.7H8.7V12.4H4.3V8.7H0.6V4.3H4.3Z" fill="#8cd04a" stroke="#4a9a2a" stroke-width="0.9"/></svg>
<svg class="b" style="left:1469px;top:173.7px;opacity:1;" width="13" height="13" viewBox="0 0 13 13"><path d="M2.2 2.2L10.8 10.8M10.8 2.2L2.2 10.8" stroke="#c02838" stroke-width="4.6" stroke-linecap="round"/><path d="M2.2 2.2L10.8 10.8M10.8 2.2L2.2 10.8" stroke="#ec5a64" stroke-width="3" stroke-linecap="round"/></svg>
<svg class="b" style="left:1469px;top:212.5px;opacity:1;" width="13" height="13" viewBox="0 0 13 13"><path d="M2.2 2.2L10.8 10.8M10.8 2.2L2.2 10.8" stroke="#c02838" stroke-width="4.6" stroke-linecap="round"/><path d="M2.2 2.2L10.8 10.8M10.8 2.2L2.2 10.8" stroke="#ec5a64" stroke-width="3" stroke-linecap="round"/></svg>
<svg class="b" style="left:1469px;top:263.5px;opacity:1;" width="13" height="13" viewBox="0 0 13 13"><path d="M2.2 2.2L10.8 10.8M10.8 2.2L2.2 10.8" stroke="#c02838" stroke-width="4.6" stroke-linecap="round"/><path d="M2.2 2.2L10.8 10.8M10.8 2.2L2.2 10.8" stroke="#ec5a64" stroke-width="3" stroke-linecap="round"/></svg>
<svg class="b" style="left:1445px;top:316.5px;" width="13" height="13" viewBox="0 0 13 13"><path d="M4.3 0.6H8.7V4.3H12.4V8.7H8.7V12.4H4.3V8.7H0.6V4.3H4.3Z" fill="#8cd04a" stroke="#4a9a2a" stroke-width="0.9"/></svg>
<svg class="b" style="left:1469px;top:316.5px;opacity:1;" width="13" height="13" viewBox="0 0 13 13"><path d="M2.2 2.2L10.8 10.8M10.8 2.2L2.2 10.8" stroke="#c02838" stroke-width="4.6" stroke-linecap="round"/><path d="M2.2 2.2L10.8 10.8M10.8 2.2L2.2 10.8" stroke="#ec5a64" stroke-width="3" stroke-linecap="round"/></svg>
<svg class="b" style="left:1469px;top:355.5px;opacity:1;" width="13" height="13" viewBox="0 0 13 13"><path d="M2.2 2.2L10.8 10.8M10.8 2.2L2.2 10.8" stroke="#c02838" stroke-width="4.6" stroke-linecap="round"/><path d="M2.2 2.2L10.8 10.8M10.8 2.2L2.2 10.8" stroke="#ec5a64" stroke-width="3" stroke-linecap="round"/></svg>
<svg class="b" style="left:64px;top:400px;" width="13" height="13" viewBox="0 0 13 13"><path d="M4.3 0.6H8.7V4.3H12.4V8.7H8.7V12.4H4.3V8.7H0.6V4.3H4.3Z" fill="#8cd04a" stroke="#4a9a2a" stroke-width="0.9"/></svg>
<svg class="b" style="left:1814px;top:165px;" width="13" height="13" viewBox="0 0 13 13"><path d="M4.3 0.6H8.7V4.3H12.4V8.7H8.7V12.4H4.3V8.7H0.6V4.3H4.3Z" fill="#8cd04a" stroke="#4a9a2a" stroke-width="0.9"/></svg>
<svg class="b" style="left:1814.5px;top:196px;opacity:0.45;" width="13" height="13" viewBox="0 0 13 13"><path d="M2.2 2.2L10.8 10.8M10.8 2.2L2.2 10.8" stroke="#c02838" stroke-width="4.6" stroke-linecap="round"/><path d="M2.2 2.2L10.8 10.8M10.8 2.2L2.2 10.8" stroke="#ec5a64" stroke-width="3" stroke-linecap="round"/></svg>
<svg class="b" style="left:1439px;top:210px;" width="17" height="17" viewBox="0 0 17 17"><g transform="rotate(45 8.5 8.5)"><rect x="5.5" y="-0.5" width="6" height="8.5" rx="2.6" fill="#f4d278" stroke="#c8982a" stroke-width="0.8"/><rect x="5.3" y="7.6" width="6.4" height="3.2" rx="0.6" fill="#9a9a9a" stroke="#7a6a50" stroke-width="0.6"/><path d="M5.6 10.8L8.5 17L11.4 10.8Z" fill="#fffbd0" stroke="#e0d070" stroke-width="0.7"/><circle cx="8.5" cy="2.6" r="0.9" fill="#5a4010"/></g></svg>
<svg class="b" style="left:1439px;top:261.4px;" width="17" height="17" viewBox="0 0 17 17"><g transform="rotate(45 8.5 8.5)"><rect x="5.5" y="-0.5" width="6" height="8.5" rx="2.6" fill="#f4d278" stroke="#c8982a" stroke-width="0.8"/><rect x="5.3" y="7.6" width="6.4" height="3.2" rx="0.6" fill="#9a9a9a" stroke="#7a6a50" stroke-width="0.6"/><path d="M5.6 10.8L8.5 17L11.4 10.8Z" fill="#fffbd0" stroke="#e0d070" stroke-width="0.7"/><circle cx="8.5" cy="2.6" r="0.9" fill="#5a4010"/></g></svg>
<svg class="b" style="left:217.3px;top:211.3px;" width="14" height="14" viewBox="0 0 14 14"><circle cx="7" cy="7" r="6.5" fill="#58b44f" stroke="#3f9a3a" stroke-width="1"/><path d="M3.6 7.2L6 9.6L10.6 4.8" stroke="#fff" stroke-width="2" fill="none"/></svg>
<svg class="b" style="left:217px;top:262.5px;" width="14" height="14" viewBox="0 0 14 14"><path d="M7 0.8L13.3 13.2H0.7Z" fill="#f4f000" stroke="#000" stroke-width="1.2" stroke-linejoin="round"/><rect x="6.1" y="4.4" width="1.8" height="5" fill="#000"/><rect x="6.1" y="10.3" width="1.8" height="1.8" fill="#000"/></svg>
</body></html>
